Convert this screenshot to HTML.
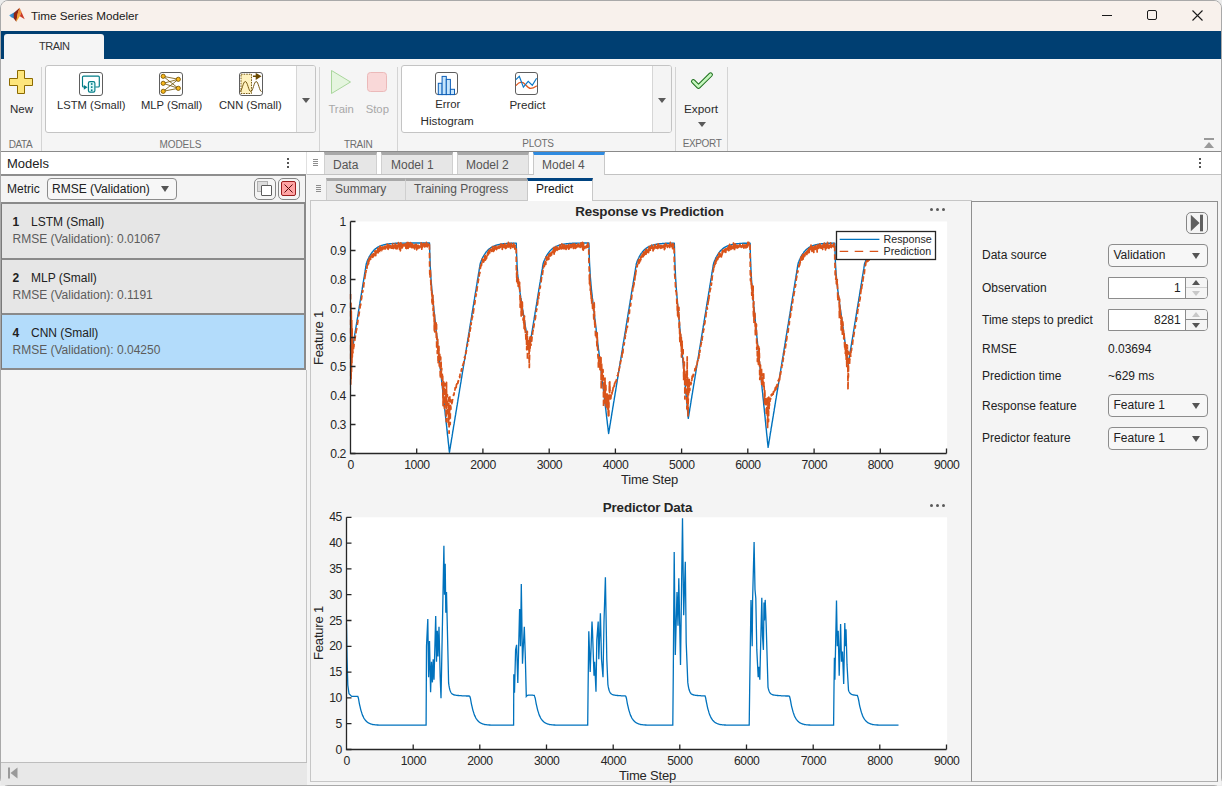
<!DOCTYPE html>
<html><head><meta charset="utf-8"><title>Time Series Modeler</title>
<style>
*{box-sizing:border-box;margin:0;padding:0}
html,body{width:1222px;height:786px;overflow:hidden;background:#ececec}
body{font-family:"Liberation Sans",sans-serif;position:relative;color:#212121}
.a{position:absolute}
.t{position:absolute;white-space:nowrap;line-height:1}
.sep{position:absolute;top:67px;width:1px;height:84px;background:#d4d4d4}
.glab{position:absolute;top:139px;font-size:10px;color:#6e6e6e;line-height:1;white-space:nowrap;letter-spacing:-0.1px}
.tbt{position:absolute;font-size:11.3px;color:#2b2b2b;line-height:1;white-space:nowrap;text-align:center}
.tab{position:absolute;top:152px;height:22px;background:#e6e6e6;border-top:3px solid #a8a8a8;border-left:1px solid #d0d0d0;border-right:1px solid #d0d0d0;font-size:12px;color:#555;line-height:1}
.itab{position:absolute;top:178px;height:22px;background:#e6e6e6;border-top:3px solid #a8a8a8;border-left:1px solid #cfcfcf;border-right:1px solid #cfcfcf;font-size:12px;color:#555;line-height:1}
.lbl{position:absolute;left:982px;font-size:12px;color:#212121;line-height:1;white-space:nowrap}
.dd{position:absolute;left:1108px;width:100px;height:23px;border:1px solid #8c8c8c;border-radius:4px;background:#f7f7f7}
.dd .v{position:absolute;left:4.5px;top:4.2px;font-size:12px;line-height:1;color:#212121}
.dd .ar{position:absolute;right:7px;top:8px;width:0;height:0;border-left:4px solid transparent;border-right:4px solid transparent;border-top:6px solid #555}
.item{position:absolute;left:1px;width:305px;background:#e6e6e6;border-left:1px solid #7a7a7a;border-right:2px solid #8a8a8a}
.item .n{position:absolute;left:10.5px;top:12px;font-size:12px;font-weight:bold;color:#212121;line-height:1}
.item .nm{position:absolute;left:29px;top:12px;font-size:12px;color:#212121;line-height:1}
.item .m{position:absolute;left:10.5px;top:29px;font-size:12px;color:#5c5c5c;line-height:1}
.grip{position:absolute;width:5px;height:7px;background:repeating-linear-gradient(#8e8e8e 0 1px,transparent 1px 2px)}
</style></head><body>
<!-- window frame -->
<div class="a" style="left:0;top:0;width:1222px;height:786px;background:#f5f5f5;border:1px solid #a9a9a9;border-radius:8px"></div>
<!-- title bar -->
<div class="a" style="left:1px;top:1px;width:1220px;height:30px;background:#f8f1ec;border-radius:7px 7px 0 0"></div>
<svg class="a" style="left:0;top:0" width="30" height="26" viewBox="0 0 30 26">
  <defs><linearGradient id="lgo" x1="0" y1="0" x2="0" y2="1"><stop offset="0" stop-color="#e0702a"/><stop offset="0.5" stop-color="#f2a13a"/><stop offset="1" stop-color="#f6b21f"/></linearGradient>
  <linearGradient id="lgb" x1="0" y1="0" x2="1" y2="0"><stop offset="0" stop-color="#3d9ee0"/><stop offset="1" stop-color="#1d5f9e"/></linearGradient></defs>
  <path d="M9.2 15.3 L14.5 12.3 L18.6 9.2 L15.8 13.5 L14.2 18.6 L11.2 17.2 Z" fill="url(#lgb)"/>
  <path d="M13.8 13.2 L19.6 7.8 L18 13 L16.3 21.8 L13.8 18.6 Z" fill="#8e2414"/>
  <path d="M19.6 7.8 L21.4 12.5 L19.8 16.2 L16.3 21.8 L17.6 13.5 Z" fill="url(#lgo)"/>
  <path d="M19.6 7.8 L24.7 19.2 L21.5 17.2 L19.8 16.2 L21.4 12.5 Z" fill="#cc3b26"/>
</svg>
<div class="t" style="left:31px;top:10px;font-size:11.7px;color:#1a1a1a">Time Series Modeler</div>
<!-- window buttons -->
<div class="a" style="left:1102px;top:15px;width:10px;height:1px;background:#1a1a1a"></div>
<div class="a" style="left:1147px;top:10px;width:10px;height:10px;border:1px solid #1a1a1a;border-radius:2px"></div>
<svg class="a" style="left:1192px;top:10px" width="11" height="11" viewBox="0 0 11 11"><path d="M0.5 0.5 L10.5 10.5 M10.5 0.5 L0.5 10.5" stroke="#1a1a1a" stroke-width="1.1"/></svg>
<!-- blue tab bar -->
<div class="a" style="left:1px;top:31px;width:1220px;height:28px;background:#003f72"></div>
<div class="a" style="left:4px;top:34px;width:100px;height:25px;background:#f5f5f5;border-radius:3px 3px 0 0"></div>
<div class="t" style="left:39px;top:41px;font-size:11px;letter-spacing:-0.5px;color:#333">TRAIN</div>
<!-- toolstrip -->
<div class="a" style="left:1px;top:59px;width:1220px;height:93px;background:#f5f5f5;border-bottom:1px solid #8a8a8a"></div>
<div class="a" style="left:45px;top:65px;width:271px;height:68px;background:#fff;border:1px solid #c4c4c4;border-radius:3px"></div>
<div class="a" style="left:296px;top:66px;width:19px;height:66px;background:#f4f4f4;border-left:1px solid #d6d6d6;border-radius:0 2px 2px 0"></div>
<div class="a" style="left:302px;top:98px;border-left:4px solid transparent;border-right:4px solid transparent;border-top:5px solid #5a5a5a"></div>
<div class="a" style="left:401px;top:65px;width:271px;height:68px;background:#fff;border:1px solid #c4c4c4;border-radius:3px"></div>
<div class="a" style="left:652px;top:66px;width:19px;height:66px;background:#f4f4f4;border-left:1px solid #d6d6d6;border-radius:0 2px 2px 0"></div>
<div class="a" style="left:658px;top:98px;border-left:4px solid transparent;border-right:4px solid transparent;border-top:5px solid #5a5a5a"></div>
<div class="sep" style="left:41px"></div>
<div class="sep" style="left:319px"></div>
<div class="sep" style="left:397px"></div>
<div class="sep" style="left:675px"></div>
<div class="sep" style="left:727px"></div>
<svg class="a" style="left:0;top:59px" width="760" height="92" viewBox="0 59 760 92"><path d="M17.5 70.5 h7 v8 h8 v7 h-8 v8 h-7 v-8 h-8 v-7 h8 z" fill="#fde57c" stroke="#8c6a00" stroke-width="1"/><rect x="79.5" y="72.5" width="23" height="23" rx="2.5" fill="#fff" stroke="#5e5e5e" stroke-width="1"/><g transform="translate(79,72)"><path d="M5.5 15 h-1 a1 1 0 0 1 -1 -1 v-8.9 a1 1 0 0 1 1 -1 h14.8 a1 1 0 0 1 1 1 v8.9 a1 1 0 0 1 -1 1 h-3" fill="none" stroke="#007c86" stroke-width="1.15"/><rect x="9.4" y="9.6" width="6.5" height="10.5" rx="1.6" fill="#dcfafa" stroke="#007c86" stroke-width="1.15"/><rect x="11.9" y="11.2" width="1.6" height="1.6" fill="#007c86"/><rect x="11.9" y="14.3" width="1.6" height="1.6" fill="#007c86"/><rect x="11.9" y="17.4" width="1.6" height="1.6" fill="#007c86"/><path d="M4.8 13 L8.6 15.2 L4.8 17.7Z" fill="#007c86"/></g><rect x="159.5" y="72.5" width="23" height="23" rx="2.5" fill="#fff" stroke="#5e5e5e" stroke-width="1"/><g transform="translate(159,72)"><line x1="4.2" y1="4.3" x2="19.3" y2="7.3" stroke="#6b4d00" stroke-width="0.8"/><line x1="4.2" y1="4.3" x2="19.3" y2="16.3" stroke="#6b4d00" stroke-width="0.8"/><line x1="4.2" y1="11.3" x2="19.3" y2="7.3" stroke="#6b4d00" stroke-width="0.8"/><line x1="4.2" y1="11.3" x2="19.3" y2="16.3" stroke="#6b4d00" stroke-width="0.8"/><line x1="4.2" y1="19.3" x2="19.3" y2="7.3" stroke="#6b4d00" stroke-width="0.8"/><line x1="4.2" y1="19.3" x2="19.3" y2="16.3" stroke="#6b4d00" stroke-width="0.8"/><circle cx="4.2" cy="4.3" r="2.1" fill="#f8b81c" stroke="#7a5600" stroke-width="0.9"/><circle cx="4.2" cy="11.3" r="2.1" fill="#f8b81c" stroke="#7a5600" stroke-width="0.9"/><circle cx="4.2" cy="19.3" r="2.1" fill="#f8b81c" stroke="#7a5600" stroke-width="0.9"/><circle cx="19.3" cy="7.3" r="2.1" fill="#f8b81c" stroke="#7a5600" stroke-width="0.9"/><circle cx="19.3" cy="16.3" r="2.1" fill="#f8b81c" stroke="#7a5600" stroke-width="0.9"/></g><rect x="239.5" y="72.5" width="23" height="23" rx="2.5" fill="#fff" stroke="#5e5e5e" stroke-width="1"/><g transform="translate(239,72)"><rect x="2" y="2.2" width="10.5" height="19.3" fill="#fff2bf" stroke="#6a4900" stroke-width="0.9" stroke-dasharray="1.6,1"/><path d="M0.8 19.6 C3 19.6 4 9.5 6.3 9.5 C8.6 9.5 9.6 19.5 11.8 19.5 C14 19.5 15 9.5 17.2 9.5 C19.4 9.5 20.4 19.6 22.6 19.6" fill="none" stroke="#6a4900" stroke-width="0.9"/><path d="M13.9 4.3 h4.5 M17.5 2.3 L21 4.3 L17.5 6.6 Z" stroke="#6a4900" stroke-width="1.6" fill="#6a4900"/></g><path d="M331.5 70.5 L350.5 82 L331.5 93.5 Z" fill="#e5f5df" stroke="#a9d69c" stroke-width="1"/><rect x="367.5" y="72.5" width="19" height="19" rx="3" fill="#f9d8d8" stroke="#ebb9b9" stroke-width="1"/><rect x="435.5" y="72.5" width="22" height="22" rx="2.5" fill="#fff" stroke="#5e5e5e" stroke-width="1"/><g transform="translate(435,72)" fill="#c6e5fc" stroke="#0e5fb8" stroke-width="1"><rect x="3.3" y="11.3" width="3.8" height="11.3"/><rect x="7.1" y="4.4" width="4.200000000000001" height="18.200000000000003"/><rect x="11.3" y="7.4" width="4.1" height="15.200000000000001"/><rect x="15.4" y="17.3" width="4.1" height="5.300000000000001"/></g><rect x="515.5" y="72.5" width="22" height="22" rx="2.5" fill="#fff" stroke="#5e5e5e" stroke-width="1"/><g transform="translate(515,72)" fill="none" stroke-width="1.2"><path d="M0.9 13.6 C3 11 5 10.2 6.5 10.2 C10 10.2 12 16.4 15.6 16.4 C18 16.4 20 15 21.8 13.8" stroke="#e0561c"/><path d="M0.9 7.6 L4.3 4.3 L8.4 15.1 L13.2 9.3 L17.3 13.2 L21.6 6.3" stroke="#0c78c6"/></g><path d="M693.3 81.4 L698.5 86.6 L710.6 74.7" fill="none" stroke="#1c6e1c" stroke-width="4.6" stroke-linecap="round" stroke-linejoin="round"/><path d="M693.3 81.4 L698.5 86.6 L710.6 74.7" fill="none" stroke="#c7f7bf" stroke-width="2.6" stroke-linecap="round" stroke-linejoin="round"/><path d="M698 122 h8 l-4 5 z" fill="#5a5a5a"/></svg>
<div class="a" style="left:1204px;top:138px;width:10px;height:2px;background:#9a9a9a"></div>
<div class="a" style="left:1204px;top:142px;border-left:5px solid transparent;border-right:5px solid transparent;border-bottom:6px solid #9a9a9a"></div>
<div class="t" style="left:10px;top:103.6px;font-size:11.5px;color:#2b2b2b;">New</div>
<div class="t" style="left:57px;top:99.8px;font-size:11.2px;color:#2b2b2b;">LSTM (Small)</div>
<div class="t" style="left:141px;top:99.8px;font-size:11.2px;color:#2b2b2b;">MLP (Small)</div>
<div class="t" style="left:219px;top:99.8px;font-size:11.2px;color:#2b2b2b;">CNN (Small)</div>
<div class="t" style="left:328.4px;top:103.8px;font-size:11.3px;color:#a8a8a8;">Train</div>
<div class="t" style="left:365.7px;top:103.8px;font-size:11.3px;color:#a8a8a8;">Stop</div>
<div class="t" style="left:435.2px;top:99.4px;font-size:11.3px;color:#2b2b2b;">Error</div>
<div class="t" style="left:420.5px;top:114.5px;font-size:11.7px;color:#2b2b2b;">Histogram</div>
<div class="t" style="left:509.4px;top:99.4px;font-size:11.6px;color:#2b2b2b;">Predict</div>
<div class="t" style="left:684px;top:103.5px;font-size:11.8px;color:#2b2b2b;">Export</div>
<div class="t" style="left:8.7px;top:139.5px;font-size:10px;color:#6e6e6e;letter-spacing:-0.4px">DATA</div>
<div class="t" style="left:159.6px;top:139.5px;font-size:10px;color:#6e6e6e;letter-spacing:-0.1px">MODELS</div>
<div class="t" style="left:343.9px;top:139.5px;font-size:10px;color:#6e6e6e;letter-spacing:-0.3px">TRAIN</div>
<div class="t" style="left:522.3px;top:139.3px;font-size:10px;color:#6e6e6e;letter-spacing:-0.3px">PLOTS</div>
<div class="t" style="left:682.8px;top:139.3px;font-size:10px;color:#6e6e6e;letter-spacing:-0.4px">EXPORT</div>
<!-- models panel -->
<div class="a" style="left:1px;top:152px;width:305px;height:23px;background:#fff"></div>
<div class="t" style="left:7px;top:157px;font-size:13px;color:#212121">Models</div>
<div class="a" style="left:287px;top:158px;width:2px;height:2px;background:#555"></div>
<div class="a" style="left:287px;top:162px;width:2px;height:2px;background:#555"></div>
<div class="a" style="left:287px;top:166px;width:2px;height:2px;background:#555"></div>
<div class="a" style="left:1px;top:174px;width:305px;height:2px;background:#8e8e8e"></div>
<div class="a" style="left:1px;top:176px;width:305px;height:26px;background:#f4f4f4"></div>
<div class="t" style="left:7px;top:183px;font-size:12px;color:#212121">Metric</div>
<div class="a" style="left:47px;top:178px;width:130px;height:22px;border:1px solid #8c8c8c;border-radius:4px;background:#f7f7f7"></div>
<div class="t" style="left:52px;top:183px;font-size:12px;color:#212121">RMSE (Validation)</div>
<div class="a" style="left:161px;top:186px;width:0;height:0;border-left:4px solid transparent;border-right:4px solid transparent;border-top:6px solid #555"></div>
<div class="a" style="left:254px;top:178px;width:22px;height:22px;border:1px solid #858585;border-radius:5px"></div>
<div class="a" style="left:257px;top:181px;width:11px;height:11px;background:#dcdcdc;border:1px solid #b0b0b0"></div>
<div class="a" style="left:261px;top:185px;width:11px;height:11px;background:#fff;border:1px solid #5a5a5a;border-radius:1px"></div>
<div class="a" style="left:278px;top:178px;width:22px;height:22px;border:1px solid #858585;border-radius:5px"></div>
<div class="a" style="left:281px;top:181px;width:15px;height:15px;background:#ffa3a3;border:1.5px solid #9b1d1d;border-radius:2px"></div>
<svg class="a" style="left:284px;top:184px" width="9" height="9" viewBox="0 0 9 9"><path d="M0.5 0.5L8.5 8.5M8.5 0.5L0.5 8.5" stroke="#5a0d0d" stroke-width="1"/></svg>
<div class="a" style="left:1px;top:202px;width:305px;height:2px;background:#8a8a8a"></div>
<div class="a" style="left:305px;top:175px;width:1px;height:28px;background:#8a8a8a"></div>
<!-- items -->
<div class="item" style="top:204px;height:56px;border-bottom:2px solid #8a8a8a"><span class="n">1</span><span class="nm">LSTM (Small)</span><span class="m">RMSE (Validation): 0.01067</span></div>
<div class="item" style="top:260px;height:55px;border-bottom:2px solid #8a8a8a"><span class="n">2</span><span class="nm">MLP (Small)</span><span class="m">RMSE (Validation): 0.1191</span></div>
<div class="item" style="top:315px;height:55px;background:#b3dcfb;border-bottom:2px solid #8a8a8a"><span class="n">4</span><span class="nm">CNN (Small)</span><span class="m">RMSE (Validation): 0.04250</span></div>
<div class="a" style="left:306px;top:370px;width:1px;height:392px;background:#c4c4c4"></div>
<!-- models footer -->
<div class="a" style="left:1px;top:762px;width:306px;height:23px;background:#e8e8e8;border-top:1px solid #bdbdbd"></div>
<svg class="a" style="left:8px;top:767px" width="10" height="12" viewBox="0 0 10 12"><rect x="0" y="0.5" width="2" height="11" fill="#9a9a9a"/><path d="M9.5 0.5 L2.5 6 L9.5 11.5Z" fill="#9a9a9a"/></svg>
<!-- document tab bar -->
<div class="a" style="left:307px;top:152px;width:914px;height:23px;background:#fff;border-bottom:1px solid #c2c2c2"></div>
<div class="a" style="left:306px;top:152px;width:1px;height:23px;background:#e0e0e0"></div>
<div class="grip" style="left:313px;top:159px"></div>
<div class="tab" style="left:324px;width:53px"><span class="t" style="left:8px;top:4px">Data</span></div>
<div class="tab" style="left:381px;width:72px"><span class="t" style="left:9px;top:4px">Model 1</span></div>
<div class="tab" style="left:457px;width:72px"><span class="t" style="left:8px;top:4px">Model 2</span></div>
<div class="tab" style="left:533px;width:72px;height:23px;background:#f4f4f4;border-top-color:#2f8be0;border-left-color:#c8c8c8;border-right-color:#c8c8c8"><span class="t" style="left:8px;top:4px">Model 4</span></div>
<div class="a" style="left:1199px;top:158px;width:2px;height:2px;background:#555"></div>
<div class="a" style="left:1199px;top:162px;width:2px;height:2px;background:#555"></div>
<div class="a" style="left:1199px;top:166px;width:2px;height:2px;background:#555"></div>
<!-- doc content -->
<div class="a" style="left:307px;top:175px;width:914px;height:610px;background:#f4f4f4"></div>
<div class="grip" style="left:316px;top:185px"></div>
<div class="itab" style="left:326px;width:80px"><span class="t" style="left:8px;top:1.5px">Summary</span></div>
<div class="itab" style="left:405px;width:123px"><span class="t" style="left:8px;top:1.5px">Training Progress</span></div>
<!-- plot panel -->
<div class="a" style="left:310px;top:200px;width:662px;height:582px;border:1px solid #c6c6c6;border-right:none;background:#f4f4f4"></div>
<div class="itab" style="left:527px;width:66px;height:23px;background:#fff;border-top-color:#004380;border-left-color:#c8c8c8;border-right-color:#c8c8c8"><span class="t" style="left:8px;top:1.5px;color:#1a1a1a">Predict</span></div>
<svg class="a" style="left:0;top:0" width="1222" height="786" viewBox="0 0 1222 786" font-family="Liberation Sans, sans-serif">
<rect x="350.5" y="221.5" width="596.6" height="232.0" fill="#fff"/>
<rect x="346.5" y="517.3" width="600.6" height="232.20000000000005" fill="#fff"/>
<clipPath id="c1"><rect x="349.5" y="218.5" width="598.0" height="235.0"/></clipPath>
<clipPath id="c2"><rect x="345.5" y="514.3" width="602.0" height="235.20000000000005"/></clipPath>
<g clip-path="url(#c1)"><polyline points="350.5,360.7 350.8,359.1 351.0,357.5 351.3,355.8 351.6,354.2 351.8,352.6 352.1,351.0 352.4,349.3 352.6,347.7 352.9,346.1 353.1,344.5 353.4,342.8 353.7,341.2 353.9,339.6 354.2,338.0 354.5,336.3 354.7,334.7 355.0,333.1 355.3,331.5 355.5,329.8 355.8,328.2 356.1,326.6 356.3,325.0 356.6,323.3 356.9,321.7 357.1,320.1 357.4,318.5 357.7,316.9 357.9,315.2 358.2,313.6 358.4,312.0 358.7,310.4 359.0,308.7 359.2,307.1 359.5,305.5 359.8,303.9 360.0,302.2 360.3,300.6 360.6,299.0 360.8,297.4 361.1,295.7 361.4,294.1 361.6,292.5 361.9,290.9 362.2,289.2 362.4,287.6 362.7,286.0 362.9,284.4 363.2,282.7 363.5,281.1 363.7,279.5 364.0,277.9 364.3,276.3 364.5,274.6 364.8,273.0 365.1,271.4 365.3,269.8 365.6,268.1 365.9,266.5 366.1,264.9 366.4,263.4 366.7,262.7 366.9,262.0 367.2,261.3 367.5,260.6 367.7,260.0 368.0,259.4 368.2,258.8 368.5,258.3 368.8,257.7 369.0,257.2 369.3,256.7 369.6,256.2 369.8,255.7 370.1,255.3 370.4,254.8 370.6,254.4 370.9,254.0 371.2,253.6 371.4,253.2 371.7,252.8 372.0,252.5 372.2,252.2 372.5,251.8 372.8,251.5 373.0,251.2 373.3,250.9 373.5,250.6 373.8,250.4 374.1,250.1 374.3,249.8 374.6,249.6 374.9,249.3 375.1,249.1 375.4,248.9 375.7,248.7 375.9,248.5 376.2,248.3 376.5,248.1 376.7,247.9 377.0,247.7 377.3,247.6 377.5,247.4 377.8,247.2 378.0,247.1 378.3,246.9 378.6,246.8 378.8,246.7 379.1,246.5 379.4,246.4 379.6,246.3 379.9,246.2 380.2,246.0 380.4,245.9 380.7,245.8 381.0,245.7 381.2,245.6 381.5,245.5 381.8,245.4 382.0,245.4 382.3,245.3 382.6,245.2 382.8,245.1 383.1,245.0 383.3,245.0 383.6,244.9 383.9,244.8 384.1,244.7 384.4,244.7 384.7,244.6 384.9,244.6 385.2,244.5 385.5,244.5 385.7,244.4 386.0,244.3 386.3,244.3 386.5,244.3 386.8,244.2 387.1,244.2 387.3,244.1 387.6,244.1 387.8,244.0 388.1,244.0 388.4,244.0 388.6,243.9 388.9,243.9 389.2,243.9 389.4,243.8 389.7,243.8 390.0,243.8 390.2,243.7 390.5,243.7 390.8,243.7 391.0,243.7 391.3,243.6 391.6,243.6 391.8,243.6 392.1,243.6 392.4,243.5 392.6,243.5 392.9,243.5 393.1,243.5 393.4,243.5 393.7,243.4 393.9,243.4 394.2,243.4 394.5,243.4 394.7,243.4 395.0,243.4 395.3,243.3 395.5,243.3 395.8,243.3 396.1,243.3 396.3,243.3 396.6,243.3 396.9,243.3 397.1,243.3 397.4,243.3 397.7,243.2 397.9,243.2 398.2,243.2 398.4,243.2 398.7,243.2 399.0,243.2 399.2,243.2 399.5,243.2 399.8,243.2 400.0,243.2 400.3,243.2 400.6,243.1 400.8,243.1 401.1,243.1 401.4,243.1 401.6,243.1 401.9,243.1 402.2,243.1 402.4,243.1 402.7,243.1 402.9,243.1 403.2,243.1 403.5,243.1 403.7,243.1 404.0,243.1 404.3,243.1 404.5,243.1 404.8,243.1 405.1,243.1 405.3,243.1 405.6,243.1 405.9,243.1 406.1,243.0 406.4,243.0 406.7,243.0 406.9,243.0 407.2,243.0 407.5,243.0 407.7,243.0 408.0,243.0 408.2,243.0 408.5,243.0 408.8,243.0 409.0,243.0 409.3,243.0 409.6,243.0 409.8,243.0 410.1,243.0 410.4,243.0 410.6,243.0 410.9,243.0 411.2,243.0 411.4,243.0 411.7,243.0 412.0,243.0 412.2,243.0 412.5,243.0 412.7,243.0 413.0,243.0 413.3,243.0 413.5,243.0 413.8,243.0 414.1,243.0 414.3,243.0 414.6,243.0 414.9,243.0 415.1,243.0 415.4,243.0 415.7,243.0 415.9,243.0 416.2,243.0 416.5,243.0 416.7,243.0 417.0,243.0 417.3,243.0 417.5,243.0 417.8,243.0 418.0,243.0 418.3,243.0 418.6,243.0 418.8,243.0 419.1,243.0 419.4,243.0 419.6,243.0 419.9,243.0 420.2,243.0 420.4,243.0 420.7,243.0 421.0,243.0 421.2,243.0 421.5,243.0 421.8,243.0 422.0,243.0 422.3,243.0 422.5,243.0 422.8,243.0 423.1,243.0 423.3,243.0 423.6,243.0 423.9,243.0 424.1,243.0 424.4,243.0 424.7,243.0 424.9,243.0 425.2,243.0 425.5,243.0 425.7,243.0 426.0,243.0 426.3,243.0 426.5,243.0 426.8,243.0 427.1,243.0 427.3,243.0 427.6,243.0 427.8,243.0 428.1,243.0 428.4,243.0 428.6,243.0 428.9,243.0 429.2,243.0 429.4,243.0 429.5,243.0 429.7,250.6 430.0,258.8 430.2,265.3 430.5,270.7 430.8,275.3 431.0,279.2 431.3,282.8 431.6,286.0 431.8,289.0 432.1,291.8 432.4,294.5 432.6,297.2 432.9,299.7 433.1,302.3 433.4,304.8 433.7,307.3 433.9,309.8 434.2,312.2 434.5,314.7 434.7,317.1 435.0,319.6 435.3,322.0 435.5,324.5 435.8,326.9 436.1,329.3 436.3,331.8 436.6,334.2 436.9,336.6 437.1,339.1 437.4,341.5 437.6,344.0 437.9,346.4 438.2,348.8 438.4,351.3 438.7,353.7 439.0,356.1 439.2,358.6 439.5,361.0 439.8,363.4 440.0,365.9 440.3,368.3 440.6,370.7 440.8,373.2 441.1,375.6 441.4,378.1 441.6,380.5 441.9,382.9 442.2,385.4 442.4,387.8 442.7,390.2 442.9,392.7 443.2,395.1 443.5,397.5 443.7,400.0 444.0,402.4 444.3,404.8 444.5,407.3 444.8,409.7 445.1,412.2 445.3,414.6 445.6,417.0 445.9,419.5 446.1,421.9 446.4,424.3 446.7,426.8 446.9,429.2 447.2,431.6 447.4,434.1 447.7,436.5 448.0,438.9 448.2,441.4 448.5,443.8 448.8,446.3 449.0,448.7 449.3,451.1 449.4,452.3 449.6,451.5 449.8,449.9 450.1,448.3 450.4,446.7 450.6,445.0 450.9,443.4 451.2,441.8 451.4,440.2 451.7,438.5 452.0,436.9 452.2,435.3 452.5,433.7 452.7,432.0 453.0,430.4 453.3,428.8 453.5,427.2 453.8,425.5 454.1,423.9 454.3,422.3 454.6,420.7 454.9,419.0 455.1,417.4 455.4,415.8 455.7,414.2 455.9,412.6 456.2,410.9 456.5,409.3 456.7,407.7 457.0,406.1 457.3,404.4 457.5,402.8 457.8,401.2 458.0,399.6 458.3,397.9 458.6,396.3 458.8,394.7 459.1,393.1 459.4,391.4 459.6,389.8 459.9,388.2 460.2,386.6 460.4,384.9 460.7,383.3 461.0,381.7 461.2,380.1 461.5,378.4 461.8,376.8 462.0,375.2 462.3,373.6 462.5,372.0 462.8,370.3 463.1,368.7 463.3,367.1 463.6,365.5 463.9,363.8 464.1,362.2 464.4,360.6 464.7,359.0 464.9,357.3 465.2,355.7 465.5,354.1 465.7,352.5 466.0,350.8 466.3,349.2 466.5,347.6 466.8,346.0 467.1,344.3 467.3,342.7 467.6,341.1 467.8,339.5 468.1,337.8 468.4,336.2 468.6,334.6 468.9,333.0 469.2,331.4 469.4,329.7 469.7,328.1 470.0,326.5 470.2,324.9 470.5,323.2 470.8,321.6 471.0,320.0 471.3,318.4 471.6,316.7 471.8,315.1 472.1,313.5 472.3,311.9 472.6,310.2 472.9,308.6 473.1,307.0 473.4,305.4 473.7,303.7 473.9,302.1 474.2,300.5 474.5,298.9 474.7,297.2 475.0,295.6 475.3,294.0 475.5,292.4 475.8,290.8 476.1,289.1 476.3,287.5 476.6,285.9 476.9,284.3 477.1,282.6 477.4,281.0 477.6,279.4 477.9,277.8 478.2,276.1 478.4,274.5 478.7,272.9 479.0,271.3 479.2,269.6 479.5,268.0 479.8,266.4 480.0,264.8 480.3,263.4 480.6,262.6 480.8,261.9 481.1,261.3 481.4,260.6 481.6,260.0 481.9,259.4 482.1,258.8 482.4,258.2 482.7,257.7 482.9,257.1 483.2,256.6 483.5,256.1 483.7,255.7 484.0,255.2 484.3,254.8 484.5,254.4 484.8,254.0 485.1,253.6 485.3,253.2 485.6,252.8 485.9,252.5 486.1,252.1 486.4,251.8 486.7,251.5 486.9,251.2 487.2,250.9 487.4,250.6 487.7,250.3 488.0,250.1 488.2,249.8 488.5,249.6 488.8,249.3 489.0,249.1 489.3,248.9 489.6,248.7 489.8,248.5 490.1,248.3 490.4,248.1 490.6,247.9 490.9,247.7 491.2,247.6 491.4,247.4 491.7,247.2 492.0,247.1 492.2,246.9 492.5,246.8 492.7,246.7 493.0,246.5 493.3,246.4 493.5,246.3 493.8,246.2 494.1,246.0 494.3,245.9 494.6,245.8 494.9,245.7 495.1,245.6 495.4,245.5 495.7,245.4 495.9,245.3 496.2,245.3 496.5,245.2 496.7,245.1 497.0,245.0 497.2,245.0 497.5,244.9 497.8,244.8 498.0,244.7 498.3,244.7 498.6,244.6 498.8,244.6 499.1,244.5 499.4,244.4 499.6,244.4 499.9,244.3 500.2,244.3 500.4,244.2 500.7,244.2 501.0,244.2 501.2,244.1 501.5,244.1 501.8,244.0 502.0,244.0 502.3,244.0 502.5,243.9 502.8,243.9 503.1,243.9 503.3,243.8 503.6,243.8 503.9,243.8 504.1,243.7 504.4,243.7 504.7,243.7 504.9,243.7 505.2,243.6 505.5,243.6 505.7,243.6 506.0,243.6 506.3,243.5 506.5,243.5 506.8,243.5 507.0,243.5 507.3,243.5 507.6,243.4 507.8,243.4 508.1,243.4 508.4,243.4 508.6,243.4 508.9,243.4 509.2,243.3 509.4,243.3 509.7,243.3 510.0,243.3 510.2,243.3 510.5,243.3 510.8,243.3 511.0,243.3 511.3,243.2 511.6,243.2 511.8,243.2 512.1,243.2 512.3,243.2 512.6,243.2 512.9,243.2 513.1,243.2 513.4,243.2 513.7,243.2 513.9,243.2 514.2,243.2 514.5,243.1 514.7,243.1 515.0,243.1 515.3,243.1 515.5,243.1 515.8,243.1 516.1,243.1 516.3,243.1 516.3,245.6 516.6,254.1 516.9,260.6 517.1,265.8 517.4,269.9 517.6,273.4 517.9,276.3 518.2,278.9 518.4,281.2 518.7,283.4 519.0,285.4 519.2,287.3 519.5,289.1 519.8,290.9 520.0,292.6 520.3,294.3 520.6,296.1 520.8,297.7 521.1,299.4 521.4,301.1 521.6,302.8 521.9,304.4 522.1,306.1 522.4,307.8 522.7,309.4 522.9,311.1 523.2,312.8 523.5,314.4 523.7,316.1 524.0,317.7 524.3,319.4 524.5,321.1 524.8,322.7 525.1,324.4 525.3,326.0 525.6,327.7 525.9,329.4 526.1,331.0 526.4,332.7 526.7,334.3 526.9,336.0 527.2,337.7 527.4,339.3 527.7,341.0 528.0,342.6 528.2,344.3 528.5,345.9 528.8,347.6 529.0,349.3 529.1,349.7 529.3,348.5 529.6,346.8 529.8,345.2 530.1,343.6 530.4,342.0 530.6,340.3 530.9,338.7 531.2,337.1 531.4,335.5 531.7,333.8 531.9,332.2 532.2,330.6 532.5,329.0 532.7,327.4 533.0,325.7 533.3,324.1 533.5,322.5 533.8,320.9 534.1,319.2 534.3,317.6 534.6,316.0 534.9,314.4 535.1,312.7 535.4,311.1 535.7,309.5 535.9,307.9 536.2,306.2 536.5,304.6 536.7,303.0 537.0,301.4 537.2,299.7 537.5,298.1 537.8,296.5 538.0,294.9 538.3,293.2 538.6,291.6 538.8,290.0 539.1,288.4 539.4,286.8 539.6,285.1 539.9,283.5 540.2,281.9 540.4,280.3 540.7,278.6 541.0,277.0 541.2,275.4 541.5,273.8 541.7,272.1 542.0,270.5 542.3,268.9 542.5,267.3 542.8,265.6 543.1,264.0 543.3,263.0 543.6,262.3 543.9,261.6 544.1,260.9 544.4,260.3 544.7,259.7 544.9,259.1 545.2,258.5 545.5,258.0 545.7,257.4 546.0,256.9 546.3,256.4 546.5,255.9 546.8,255.5 547.0,255.0 547.3,254.6 547.6,254.2 547.8,253.8 548.1,253.4 548.4,253.0 548.6,252.7 548.9,252.3 549.2,252.0 549.4,251.7 549.7,251.3 550.0,251.0 550.2,250.8 550.5,250.5 550.8,250.2 551.0,249.9 551.3,249.7 551.6,249.5 551.8,249.2 552.1,249.0 552.3,248.8 552.6,248.6 552.9,248.4 553.1,248.2 553.4,248.0 553.7,247.8 553.9,247.6 554.2,247.5 554.5,247.3 554.7,247.2 555.0,247.0 555.3,246.9 555.5,246.7 555.8,246.6 556.1,246.5 556.3,246.3 556.6,246.2 556.8,246.1 557.1,246.0 557.4,245.9 557.6,245.8 557.9,245.7 558.2,245.6 558.4,245.5 558.7,245.4 559.0,245.3 559.2,245.2 559.5,245.1 559.8,245.1 560.0,245.0 560.3,244.9 560.6,244.8 560.8,244.8 561.1,244.7 561.4,244.7 561.6,244.6 561.9,244.5 562.1,244.5 562.4,244.4 562.7,244.4 562.9,244.3 563.2,244.3 563.5,244.2 563.7,244.2 564.0,244.1 564.3,244.1 564.5,244.1 564.8,244.0 565.1,244.0 565.3,243.9 565.6,243.9 565.9,243.9 566.1,243.8 566.4,243.8 566.6,243.8 566.9,243.7 567.2,243.7 567.4,243.7 567.7,243.7 568.0,243.6 568.2,243.6 568.5,243.6 568.8,243.6 569.0,243.5 569.3,243.5 569.6,243.5 569.8,243.5 570.1,243.5 570.4,243.5 570.6,243.4 570.9,243.4 571.2,243.4 571.4,243.4 571.7,243.4 571.9,243.4 572.2,243.3 572.5,243.3 572.7,243.3 573.0,243.3 573.3,243.3 573.5,243.3 573.8,243.3 574.1,243.3 574.3,243.2 574.6,243.2 574.9,243.2 575.1,243.2 575.4,243.2 575.7,243.2 575.9,243.2 576.2,243.2 576.5,243.2 576.7,243.2 577.0,243.2 577.2,243.2 577.5,243.1 577.8,243.1 578.0,243.1 578.3,243.1 578.6,243.1 578.8,243.1 579.1,243.1 579.4,243.1 579.6,243.1 579.9,243.1 580.2,243.1 580.4,243.1 580.7,243.1 581.0,243.1 581.2,243.1 581.5,243.1 581.7,243.1 582.0,243.1 582.3,243.1 582.5,243.1 582.8,243.0 583.1,243.0 583.3,243.0 583.6,243.0 583.9,243.0 584.1,243.0 584.4,243.0 584.7,243.0 584.9,243.0 585.2,243.0 585.5,243.0 585.7,243.0 586.0,243.0 586.3,243.0 586.5,243.0 586.8,243.0 587.0,243.0 587.3,243.0 587.6,243.0 587.8,243.0 588.1,243.0 588.4,243.0 588.6,243.0 588.9,243.0 589.2,252.6 589.4,260.1 589.7,266.1 590.0,271.0 590.2,275.2 590.5,278.8 590.8,282.0 591.0,284.9 591.3,287.7 591.5,290.2 591.8,292.7 592.1,295.1 592.3,297.4 592.6,299.7 592.9,302.0 593.1,304.3 593.4,306.5 593.7,308.8 593.9,311.0 594.2,313.2 594.5,315.4 594.7,317.6 595.0,319.8 595.3,322.0 595.5,324.3 595.8,326.5 596.1,328.7 596.3,330.9 596.6,333.1 596.8,335.3 597.1,337.5 597.4,339.7 597.6,341.9 597.9,344.1 598.2,346.3 598.4,348.5 598.7,350.7 599.0,352.9 599.2,355.2 599.5,357.4 599.8,359.6 600.0,361.8 600.3,364.0 600.6,366.2 600.8,368.4 601.1,370.6 601.3,372.8 601.6,375.0 601.9,377.2 602.1,379.4 602.4,381.6 602.7,383.8 602.9,386.0 603.2,388.3 603.5,390.5 603.7,392.7 604.0,394.9 604.3,397.1 604.5,399.3 604.8,401.5 605.1,403.7 605.3,405.9 605.6,408.1 605.9,410.3 606.1,412.5 606.4,414.7 606.6,416.9 606.9,419.1 607.2,421.4 607.4,423.6 607.7,425.8 608.0,428.0 608.2,430.2 608.5,432.4 608.6,433.5 608.8,432.7 609.0,431.1 609.3,429.4 609.6,427.8 609.8,426.2 610.1,424.6 610.4,422.9 610.6,421.3 610.9,419.7 611.2,418.1 611.4,416.4 611.7,414.8 611.9,413.2 612.2,411.6 612.5,409.9 612.7,408.3 613.0,406.7 613.3,405.1 613.5,403.4 613.8,401.8 614.1,400.2 614.3,398.6 614.6,396.9 614.9,395.3 615.1,393.7 615.4,392.1 615.7,390.5 615.9,388.8 616.2,387.2 616.4,385.6 616.7,384.0 617.0,382.3 617.2,380.7 617.5,379.1 617.8,377.5 618.0,375.8 618.3,374.2 618.6,372.6 618.8,371.0 619.1,369.3 619.4,367.7 619.6,366.1 619.9,364.5 620.2,362.8 620.4,361.2 620.7,359.6 621.0,358.0 621.2,356.4 621.5,354.7 621.7,353.1 622.0,351.5 622.3,349.9 622.5,348.2 622.8,346.6 623.1,345.0 623.3,343.4 623.6,341.7 623.9,340.1 624.1,338.5 624.4,336.9 624.7,335.2 624.9,333.6 625.2,332.0 625.5,330.4 625.7,328.7 626.0,327.1 626.2,325.5 626.5,323.9 626.8,322.2 627.0,320.6 627.3,319.0 627.6,317.4 627.8,315.8 628.1,314.1 628.4,312.5 628.6,310.9 628.9,309.3 629.2,307.6 629.4,306.0 629.7,304.4 630.0,302.8 630.2,301.1 630.5,299.5 630.8,297.9 631.0,296.3 631.3,294.6 631.5,293.0 631.8,291.4 632.1,289.8 632.3,288.1 632.6,286.5 632.9,284.9 633.1,283.3 633.4,281.6 633.7,280.0 633.9,278.4 634.2,276.8 634.5,275.1 634.7,273.5 635.0,271.9 635.3,270.3 635.5,268.7 635.8,267.0 636.1,265.4 636.3,263.8 636.6,262.9 636.8,262.2 637.1,261.5 637.4,260.9 637.6,260.2 637.9,259.6 638.2,259.0 638.4,258.4 638.7,257.9 639.0,257.3 639.2,256.8 639.5,256.3 639.8,255.9 640.0,255.4 640.3,255.0 640.6,254.5 640.8,254.1 641.1,253.7 641.3,253.3 641.6,253.0 641.9,252.6 642.1,252.3 642.4,251.9 642.7,251.6 642.9,251.3 643.2,251.0 643.5,250.7 643.7,250.4 644.0,250.2 644.3,249.9 644.5,249.7 644.8,249.4 645.1,249.2 645.3,249.0 645.6,248.8 645.9,248.5 646.1,248.4 646.4,248.2 646.6,248.0 646.9,247.8 647.2,247.6 647.4,247.5 647.7,247.3 648.0,247.1 648.2,247.0 648.5,246.8 648.8,246.7 649.0,246.6 649.3,246.4 649.6,246.3 649.8,246.2 650.1,246.1 650.4,246.0 650.6,245.9 650.9,245.8 651.1,245.7 651.4,245.6 651.7,245.5 651.9,245.4 652.2,245.3 652.5,245.2 652.7,245.1 653.0,245.1 653.3,245.0 653.5,244.9 653.8,244.8 654.1,244.8 654.3,244.7 654.6,244.6 654.9,244.6 655.1,244.5 655.4,244.5 655.7,244.4 655.9,244.4 656.2,244.3 656.4,244.3 656.7,244.2 657.0,244.2 657.2,244.1 657.5,244.1 657.8,244.0 658.0,244.0 658.3,244.0 658.6,243.9 658.8,243.9 659.1,243.9 659.4,243.8 659.6,243.8 659.9,243.8 660.2,243.7 660.4,243.7 660.7,243.7 660.9,243.7 661.2,243.6 661.5,243.6 661.7,243.6 662.0,243.6 662.3,243.5 662.5,243.5 662.8,243.5 663.1,243.5 663.3,243.5 663.6,243.4 663.9,243.4 664.1,243.4 664.4,243.4 664.7,243.4 664.9,243.4 665.2,243.4 665.5,243.3 665.7,243.3 666.0,243.3 666.2,243.3 666.5,243.3 666.8,243.3 667.0,243.3 667.3,243.3 667.6,243.2 667.8,243.2 668.1,243.2 668.4,243.2 668.6,243.2 668.9,243.2 669.2,243.2 669.4,243.2 669.7,243.2 670.0,243.2 670.2,243.2 670.5,243.1 670.8,243.1 671.0,243.1 671.3,243.1 671.5,243.1 671.8,243.1 672.1,243.1 672.3,243.1 672.6,243.1 672.9,243.1 673.1,243.1 673.4,243.1 673.7,243.1 673.9,243.1 674.2,243.1 674.3,243.1 674.5,248.5 674.7,257.6 675.0,264.9 675.3,270.9 675.5,276.1 675.8,280.5 676.0,284.6 676.3,288.2 676.6,291.7 676.8,294.9 677.1,298.1 677.4,301.1 677.6,304.1 677.9,307.0 678.2,309.9 678.4,312.8 678.7,315.7 679.0,318.6 679.2,321.4 679.5,324.2 679.8,327.1 680.0,329.9 680.3,332.8 680.6,335.6 680.8,338.4 681.1,341.2 681.3,344.1 681.6,346.9 681.9,349.7 682.1,352.6 682.4,355.4 682.7,358.2 682.9,361.0 683.2,363.9 683.5,366.7 683.7,369.5 684.0,372.3 684.3,375.2 684.5,378.0 684.8,380.8 685.1,383.6 685.3,386.5 685.6,389.3 685.8,392.1 686.1,394.9 686.4,397.8 686.6,400.6 686.9,403.4 687.2,406.3 687.4,409.1 687.7,411.9 688.0,414.7 688.2,417.6 688.3,418.3 688.5,417.0 688.8,415.4 689.0,413.8 689.3,412.2 689.6,410.6 689.8,408.9 690.1,407.3 690.4,405.7 690.6,404.1 690.9,402.4 691.1,400.8 691.4,399.2 691.7,397.6 691.9,395.9 692.2,394.3 692.5,392.7 692.7,391.1 693.0,389.4 693.3,387.8 693.5,386.2 693.8,384.6 694.1,382.9 694.3,381.3 694.6,379.7 694.9,378.1 695.1,376.4 695.4,374.8 695.7,373.2 695.9,371.6 696.2,370.0 696.4,368.3 696.7,366.7 697.0,365.1 697.2,363.5 697.5,361.8 697.8,360.2 698.0,358.6 698.3,357.0 698.6,355.3 698.8,353.7 699.1,352.1 699.4,350.5 699.6,348.8 699.9,347.2 700.2,345.6 700.4,344.0 700.7,342.3 700.9,340.7 701.2,339.1 701.5,337.5 701.7,335.8 702.0,334.2 702.3,332.6 702.5,331.0 702.8,329.4 703.1,327.7 703.3,326.1 703.6,324.5 703.9,322.9 704.1,321.2 704.4,319.6 704.7,318.0 704.9,316.4 705.2,314.7 705.5,313.1 705.7,311.5 706.0,309.9 706.2,308.2 706.5,306.6 706.8,305.0 707.0,303.4 707.3,301.7 707.6,300.1 707.8,298.5 708.1,296.9 708.4,295.2 708.6,293.6 708.9,292.0 709.2,290.4 709.4,288.8 709.7,287.1 710.0,285.5 710.2,283.9 710.5,282.3 710.7,280.6 711.0,279.0 711.3,277.4 711.5,275.8 711.8,274.1 712.1,272.5 712.3,270.9 712.6,269.3 712.9,267.6 713.1,266.0 713.4,264.4 713.7,263.2 713.9,262.5 714.2,261.8 714.5,261.1 714.7,260.5 715.0,259.8 715.3,259.2 715.5,258.6 715.8,258.1 716.0,257.5 716.3,257.0 716.6,256.5 716.8,256.0 717.1,255.6 717.4,255.1 717.6,254.7 717.9,254.3 718.2,253.9 718.4,253.5 718.7,253.1 719.0,252.7 719.2,252.4 719.5,252.1 719.8,251.7 720.0,251.4 720.3,251.1 720.5,250.8 720.8,250.5 721.1,250.3 721.3,250.0 721.6,249.8 721.9,249.5 722.1,249.3 722.4,249.1 722.7,248.8 722.9,248.6 723.2,248.4 723.5,248.2 723.7,248.0 724.0,247.9 724.3,247.7 724.5,247.5 724.8,247.4 725.1,247.2 725.3,247.0 725.6,246.9 725.8,246.8 726.1,246.6 726.4,246.5 726.6,246.4 726.9,246.2 727.2,246.1 727.4,246.0 727.7,245.9 728.0,245.8 728.2,245.7 728.5,245.6 728.8,245.5 729.0,245.4 729.3,245.3 729.6,245.2 729.8,245.2 730.1,245.1 730.4,245.0 730.6,244.9 730.9,244.9 731.1,244.8 731.4,244.7 731.7,244.7 731.9,244.6 732.2,244.5 732.5,244.5 732.7,244.4 733.0,244.4 733.3,244.3 733.5,244.3 733.8,244.2 734.1,244.2 734.3,244.1 734.6,244.1 734.9,244.1 735.1,244.0 735.4,244.0 735.6,243.9 735.9,243.9 736.2,243.9 736.4,243.8 736.7,243.8 737.0,243.8 737.2,243.8 737.5,243.7 737.8,243.7 738.0,243.7 738.3,243.6 738.6,243.6 738.8,243.6 739.1,243.6 739.4,243.6 739.6,243.5 739.9,243.5 740.2,243.5 740.4,243.5 740.7,243.5 740.9,243.4 741.2,243.4 741.5,243.4 741.7,243.4 742.0,243.4 742.3,243.4 742.5,243.3 742.8,243.3 743.1,243.3 743.3,243.3 743.6,243.3 743.9,243.3 744.1,243.3 744.4,243.3 744.7,243.2 744.9,243.2 745.2,243.2 745.4,243.2 745.7,243.2 746.0,243.2 746.2,243.2 746.5,243.2 746.8,243.2 747.0,243.2 747.3,243.2 747.6,243.2 747.8,243.1 748.1,243.1 748.4,243.1 748.6,243.1 748.9,243.1 749.2,243.1 749.4,243.1 749.7,243.1 750.0,243.1 750.1,243.1 750.2,248.4 750.5,257.3 750.7,264.4 751.0,270.2 751.3,275.2 751.5,279.4 751.8,283.2 752.1,286.7 752.3,289.9 752.6,293.0 752.9,295.9 753.1,298.8 753.4,301.6 753.7,304.3 753.9,307.0 754.2,309.7 754.5,312.3 754.7,315.0 755.0,317.6 755.3,320.3 755.5,322.9 755.8,325.5 756.0,328.2 756.3,330.8 756.6,333.4 756.8,336.0 757.1,338.6 757.4,341.3 757.6,343.9 757.9,346.5 758.2,349.1 758.4,351.8 758.7,354.4 759.0,357.0 759.2,359.6 759.5,362.2 759.8,364.9 760.0,367.5 760.3,370.1 760.5,372.7 760.8,375.3 761.1,378.0 761.3,380.6 761.6,383.2 761.9,385.8 762.1,388.4 762.4,391.1 762.7,393.7 762.9,396.3 763.2,398.9 763.5,401.5 763.7,404.2 764.0,406.8 764.3,409.4 764.5,412.0 764.8,414.7 765.1,417.3 765.3,419.9 765.6,422.5 765.8,425.1 766.1,427.8 766.4,430.4 766.6,433.0 766.9,435.6 767.2,438.2 767.4,440.9 767.7,443.5 768.0,446.1 768.1,447.4 768.2,446.6 768.5,445.0 768.8,443.4 769.0,441.7 769.3,440.1 769.6,438.5 769.8,436.9 770.1,435.2 770.3,433.6 770.6,432.0 770.9,430.4 771.1,428.7 771.4,427.1 771.7,425.5 771.9,423.9 772.2,422.2 772.5,420.6 772.7,419.0 773.0,417.4 773.3,415.7 773.5,414.1 773.8,412.5 774.1,410.9 774.3,409.2 774.6,407.6 774.9,406.0 775.1,404.4 775.4,402.8 775.6,401.1 775.9,399.5 776.2,397.9 776.4,396.3 776.7,394.6 777.0,393.0 777.2,391.4 777.5,389.8 777.8,388.1 778.0,386.5 778.3,384.9 778.6,383.3 778.8,381.6 779.1,380.0 779.4,378.4 779.6,376.8 779.9,375.1 780.1,373.5 780.4,371.9 780.7,370.3 780.9,368.6 781.2,367.0 781.5,365.4 781.7,363.8 782.0,362.1 782.3,360.5 782.5,358.9 782.8,357.3 783.1,355.7 783.3,354.0 783.6,352.4 783.9,350.8 784.1,349.2 784.4,347.5 784.7,345.9 784.9,344.3 785.2,342.7 785.4,341.0 785.7,339.4 786.0,337.8 786.2,336.2 786.5,334.5 786.8,332.9 787.0,331.3 787.3,329.7 787.6,328.0 787.8,326.4 788.1,324.8 788.4,323.2 788.6,321.6 788.9,319.9 789.2,318.3 789.4,316.7 789.7,315.1 790.0,313.4 790.2,311.8 790.5,310.2 790.7,308.6 791.0,306.9 791.3,305.3 791.5,303.7 791.8,302.1 792.1,300.4 792.3,298.8 792.6,297.2 792.9,295.6 793.1,293.9 793.4,292.3 793.7,290.7 793.9,289.1 794.2,287.4 794.5,285.8 794.7,284.2 795.0,282.6 795.2,281.0 795.5,279.3 795.8,277.7 796.0,276.1 796.3,274.5 796.6,272.8 796.8,271.2 797.1,269.6 797.4,268.0 797.6,266.3 797.9,264.7 798.2,263.3 798.4,262.6 798.7,261.9 799.0,261.2 799.2,260.6 799.5,259.9 799.8,259.3 800.0,258.8 800.3,258.2 800.5,257.6 800.8,257.1 801.1,256.6 801.3,256.1 801.6,255.7 801.9,255.2 802.1,254.8 802.4,254.3 802.7,253.9 802.9,253.5 803.2,253.2 803.5,252.8 803.7,252.5 804.0,252.1 804.3,251.8 804.5,251.5 804.8,251.2 805.0,250.9 805.3,250.6 805.6,250.3 805.8,250.1 806.1,249.8 806.4,249.6 806.6,249.3 806.9,249.1 807.2,248.9 807.4,248.7 807.7,248.5 808.0,248.3 808.2,248.1 808.5,247.9 808.8,247.7 809.0,247.5 809.3,247.4 809.6,247.2 809.8,247.1 810.1,246.9 810.3,246.8 810.6,246.6 810.9,246.5 811.1,246.4 811.4,246.3 811.7,246.1 811.9,246.0 812.2,245.9 812.5,245.8 812.7,245.7 813.0,245.6 813.3,245.5 813.5,245.4 813.8,245.3 814.1,245.3 814.3,245.2 814.6,245.1 814.9,245.0 815.1,244.9 815.4,244.9 815.6,244.8 815.9,244.7 816.2,244.7 816.4,244.6 816.7,244.6 817.0,244.5 817.2,244.4 817.5,244.4 817.8,244.3 818.0,244.3 818.3,244.2 818.6,244.2 818.8,244.2 819.1,244.1 819.4,244.1 819.6,244.0 819.9,244.0 820.1,244.0 820.4,243.9 820.7,243.9 820.9,243.9 821.2,243.8 821.5,243.8 821.7,243.8 822.0,243.7 822.3,243.7 822.5,243.7 822.8,243.7 823.1,243.6 823.3,243.6 823.6,243.6 823.9,243.6 824.1,243.5 824.4,243.5 824.7,243.5 824.9,243.5 825.2,243.5 825.4,243.4 825.7,243.4 826.0,243.4 826.2,243.4 826.5,243.4 826.8,243.4 827.0,243.3 827.3,243.3 827.6,243.3 827.8,243.3 828.1,243.3 828.4,243.3 828.6,243.3 828.9,243.3 829.2,243.2 829.4,243.2 829.7,243.2 829.9,243.2 830.2,243.2 830.5,243.2 830.7,243.2 831.0,243.2 831.3,243.2 831.5,243.2 831.8,243.2 832.1,243.2 832.3,243.1 832.6,243.1 832.9,243.1 833.1,243.1 833.4,243.1 833.7,243.1 833.9,243.1 834.2,243.1 834.5,243.1 834.7,243.1 834.8,243.1 835.0,250.3 835.2,257.9 835.5,263.9 835.8,268.8 836.0,272.8 836.3,276.2 836.6,279.2 836.8,281.8 837.1,284.3 837.4,286.6 837.6,288.8 837.9,290.8 838.2,292.9 838.4,294.9 838.7,296.8 839.0,298.8 839.2,300.7 839.5,302.6 839.7,304.5 840.0,306.4 840.3,308.3 840.5,310.2 840.8,312.1 841.1,314.0 841.3,315.9 841.6,317.8 841.9,319.7 842.1,321.5 842.4,323.4 842.7,325.3 842.9,327.2 843.2,329.1 843.5,331.0 843.7,332.9 844.0,334.8 844.3,336.6 844.5,338.5 844.8,340.4 845.0,342.3 845.3,344.2 845.6,346.1 845.8,348.0 846.1,349.8 846.4,351.7 846.6,353.6 846.9,355.5 847.2,357.4 847.4,359.3 847.7,361.2 848.0,363.1 848.2,364.5 848.2,364.1 848.5,362.4 848.8,360.8 849.0,359.2 849.3,357.6 849.6,355.9 849.8,354.3 850.1,352.7 850.3,351.1 850.6,349.4 850.9,347.8 851.1,346.2 851.4,344.6 851.7,343.0 851.9,341.3 852.2,339.7 852.5,338.1 852.7,336.5 853.0,334.8 853.3,333.2 853.5,331.6 853.8,330.0 854.1,328.3 854.3,326.7 854.6,325.1 854.8,323.5 855.1,321.8 855.4,320.2 855.6,318.6 855.9,317.0 856.2,315.3 856.4,313.7 856.7,312.1 857.0,310.5 857.2,308.8 857.5,307.2 857.8,305.6 858.0,304.0 858.3,302.4 858.6,300.7 858.8,299.1 859.1,297.5 859.4,295.9 859.6,294.2 859.9,292.6 860.1,291.0 860.4,289.4 860.7,287.7 860.9,286.1 861.2,284.5 861.5,282.9 861.7,281.2 862.0,279.6 862.3,278.0 862.5,276.4 862.8,274.7 863.1,273.1 863.3,271.5 863.6,269.9 863.9,268.2 864.1,266.6 864.4,265.0 864.6,263.5 864.9,262.7 865.2,262.0 865.4,261.4 865.7,260.7 866.0,260.1 866.2,259.4 866.5,258.9 866.8,258.3 867.0,257.7 867.3,257.2 867.6,256.7 867.8,256.2 868.1,255.7 868.4,255.3 868.6,254.8 868.9,254.4 869.2,254.0 869.4,253.6 869.7,253.2 869.9,252.9 870.2,252.5 870.5,252.2 870.7,251.8 871.0,251.5 871.3,251.2 871.5,250.9 871.8,250.6 872.1,250.4 872.3,250.1 872.6,249.8 872.9,249.6 873.1,249.4 873.4,249.1 873.7,248.9 873.9,248.7 874.2,248.5 874.5,248.3 874.7,248.1 875.0,247.9 875.2,247.7 875.5,247.6 875.8,247.4 876.0,247.3 876.3,247.1 876.6,247.0 876.8,246.8 877.1,246.7 877.4,246.5 877.6,246.4 877.9,246.3 878.2,246.2 878.4,246.1 878.7,245.9 879.0,245.8 879.2,245.7 879.5,245.6 879.7,245.5 880.0,245.4 880.3,245.4 880.5,245.3 880.8,245.2 881.1,245.1 881.3,245.0 881.6,245.0 881.9,244.9 882.1,244.8 882.4,244.8 882.7,244.7 882.9,244.6 883.2,244.6 883.5,244.5 883.7,244.5 884.0,244.4 884.3,244.4 884.5,244.3 884.8,244.3 885.0,244.2 885.3,244.2 885.6,244.1 885.8,244.1 886.1,244.0 886.4,244.0 886.6,244.0 886.9,243.9 887.2,243.9 887.4,243.9 887.7,243.8 888.0,243.8 888.2,243.8 888.5,243.7 888.8,243.7 889.0,243.7 889.3,243.7 889.5,243.6 889.8,243.6 890.1,243.6 890.3,243.6 890.6,243.5 890.9,243.5 891.1,243.5 891.4,243.5 891.7,243.5 891.9,243.4 892.2,243.4 892.5,243.4 892.7,243.4 893.0,243.4 893.3,243.4 893.5,243.3 893.8,243.3 894.1,243.3 894.3,243.3 894.6,243.3 894.8,243.3 895.1,243.3 895.4,243.3 895.6,243.3 895.9,243.2 896.2,243.2 896.4,243.2 896.7,243.2 897.0,243.2 897.2,243.2 897.5,243.2 897.8,243.2 898.0,243.2 898.3,243.2 898.6,243.2 898.8,243.1" fill="none" stroke="#0072bd" stroke-width="1.4" stroke-linejoin="round"/>
<polyline points="350.5,294.0 350.7,386.1 350.9,302.7 351.1,378.8 351.3,311.4 351.5,371.5 351.7,320.0 351.9,364.3 352.1,328.7 352.3,357.0 352.5,337.4 352.7,349.7 352.9,352.9 353.1,349.6 353.3,349.7 353.5,348.5 353.7,346.8 353.9,346.6 354.1,342.8 354.3,342.6 354.5,342.2 354.7,341.2 354.9,339.0 355.1,337.9 355.3,336.3 355.5,335.0 355.7,334.1 355.9,334.5 356.1,331.6 356.3,330.3 356.5,330.0 356.7,328.8 356.9,327.1 357.1,325.7 357.3,324.9 357.5,323.1 357.7,322.9 357.9,320.5 358.0,319.5 358.2,317.5 358.4,316.8 358.6,315.5 358.8,315.5 359.0,314.0 359.2,313.2 359.4,311.0 359.6,310.4 359.8,309.3 360.0,308.3 360.2,305.5 360.4,305.7 360.6,304.8 360.8,304.1 361.0,303.4 361.2,300.4 361.4,299.0 361.6,298.5 361.8,296.0 362.0,296.0 362.2,294.1 362.4,294.4 362.6,290.4 362.8,291.7 363.0,289.5 363.2,289.7 363.4,287.8 363.6,286.9 363.8,284.1 364.0,283.8 364.2,281.1 364.4,280.3 364.6,279.8 364.8,278.1 365.0,276.5 365.2,275.8 365.4,273.6 365.6,270.8 365.8,273.0 366.0,271.0 366.2,270.6 366.4,268.9 366.6,267.9 366.8,266.3 367.0,268.3 367.2,263.5 367.4,264.2 367.6,265.1 367.8,264.9 368.0,263.3 368.2,259.7 368.4,263.8 368.6,263.6 368.8,258.2 369.0,261.4 369.2,258.2 369.4,257.9 369.6,259.1 369.8,259.7 370.0,259.4 370.2,256.9 370.4,257.6 370.6,259.5 370.8,258.0 371.0,257.2 371.2,255.3 371.4,257.0 371.6,256.8 371.8,255.5 372.0,254.7 372.2,258.2 372.4,254.9 372.6,255.0 372.8,257.3 372.9,256.2 373.1,255.8 373.3,253.7 373.5,255.0 373.7,256.2 373.9,254.4 374.1,254.7 374.3,255.1 374.5,254.7 374.7,252.4 374.9,251.2 375.1,253.3 375.3,250.9 375.5,253.8 375.7,255.6 375.9,252.0 376.1,250.1 376.3,250.0 376.5,253.0 376.7,251.3 376.9,250.8 377.1,250.7 377.3,250.5 377.5,251.9 377.7,248.5 377.9,251.6 378.1,252.8 378.3,251.9 378.5,249.0 378.7,248.5 378.9,250.0 379.1,249.0 379.3,249.7 379.5,253.0 379.7,247.4 379.9,250.2 380.1,246.1 380.3,248.9 380.5,251.1 380.7,247.1 380.9,248.8 381.1,251.1 381.3,250.9 381.5,247.8 381.7,250.6 381.9,249.2 382.1,247.1 382.3,249.7 382.5,248.5 382.7,249.3 382.9,246.7 383.1,246.1 383.3,249.0 383.5,246.8 383.7,246.2 383.9,247.1 384.1,247.9 384.3,248.1 384.5,248.3 384.7,248.1 384.9,246.1 385.1,251.0 385.3,247.3 385.5,246.4 385.7,246.7 385.9,246.5 386.1,247.8 386.3,247.9 386.5,248.5 386.7,245.9 386.9,245.5 387.1,244.3 387.3,246.5 387.5,247.5 387.7,250.5 387.8,244.5 388.0,246.8 388.2,249.3 388.4,246.4 388.6,244.5 388.8,245.9 389.0,248.0 389.2,245.2 389.4,248.2 389.6,247.1 389.8,245.8 390.0,246.3 390.2,247.6 390.4,244.0 390.6,246.6 390.8,246.3 391.0,247.0 391.2,246.0 391.4,246.7 391.6,250.4 391.8,246.0 392.0,247.0 392.2,243.7 392.4,242.9 392.6,244.7 392.8,246.7 393.0,247.0 393.2,247.7 393.4,248.5 393.6,246.8 393.8,247.7 394.0,245.6 394.2,246.0 394.4,245.6 394.6,247.7 394.8,246.0 395.0,243.6 395.2,245.3 395.4,247.3 395.6,248.5 395.8,244.3 396.0,247.6 396.2,247.7 396.4,245.3 396.6,244.2 396.8,245.9 397.0,249.0 397.2,245.0 397.4,247.9 397.6,247.2 397.8,244.1 398.0,246.8 398.2,244.5 398.4,242.6 398.6,246.4 398.8,246.1 399.0,243.5 399.2,248.3 399.4,249.1 399.6,247.0 399.8,245.7 400.0,244.9 400.2,244.7 400.4,250.8 400.6,245.0 400.8,242.9 401.0,245.6 401.2,242.4 401.4,247.2 401.6,249.0 401.8,246.0 402.0,245.1 402.2,244.6 402.4,248.0 402.6,247.9 402.7,247.5 402.9,246.8 403.1,244.8 403.3,245.6 403.5,244.7 403.7,245.8 403.9,244.3 404.1,245.3 404.3,244.9 404.5,244.8 404.7,245.7 404.9,245.1 405.1,246.1 405.3,244.0 405.5,245.8 405.7,242.4 405.9,248.1 406.1,245.6 406.3,244.5 406.5,247.5 406.7,248.5 406.9,245.4 407.1,243.3 407.3,242.5 407.5,243.3 407.7,246.0 407.9,244.3 408.1,248.4 408.3,244.9 408.5,246.9 408.7,242.6 408.9,246.4 409.1,245.3 409.3,244.1 409.5,244.6 409.7,245.5 409.9,247.1 410.1,245.3 410.3,246.4 410.5,246.0 410.7,242.7 410.9,246.0 411.1,245.6 411.3,247.1 411.5,245.6 411.7,247.6 411.9,244.9 412.1,246.5 412.3,243.9 412.5,244.8 412.7,246.1 412.9,243.0 413.1,247.7 413.3,246.1 413.5,245.5 413.7,245.2 413.9,245.8 414.1,244.6 414.3,247.8 414.5,243.4 414.7,248.9 414.9,247.0 415.1,243.9 415.3,245.7 415.5,246.1 415.7,247.2 415.9,246.5 416.1,242.8 416.3,246.9 416.5,245.5 416.7,249.8 416.9,244.4 417.1,247.8 417.3,245.9 417.5,246.0 417.6,245.4 417.8,249.7 418.0,247.9 418.2,246.7 418.4,245.4 418.6,246.1 418.8,245.1 419.0,244.0 419.2,245.3 419.4,246.1 419.6,247.9 419.8,246.9 420.0,246.2 420.2,247.1 420.4,246.1 420.6,246.4 420.8,246.8 421.0,243.6 421.2,242.8 421.4,247.9 421.6,243.6 421.8,249.1 422.0,244.0 422.2,245.5 422.4,247.3 422.6,246.9 422.8,245.0 423.0,245.6 423.2,244.0 423.4,246.6 423.6,244.2 423.8,243.3 424.0,247.7 424.2,245.3 424.4,243.9 424.6,244.7 424.8,247.0 425.0,244.3 425.2,245.9 425.4,244.2 425.6,246.5 425.8,246.6 426.0,246.7 426.2,247.8 426.4,242.4 426.6,244.8 426.8,243.6 427.0,245.6 427.2,246.8 427.4,244.9 427.6,244.9 427.8,242.8 428.0,243.3 428.2,242.4 428.4,243.6 428.6,244.7 428.8,244.9 429.0,244.6 429.2,246.5 429.4,243.0 429.6,261.9 429.8,274.2 430.0,271.1 430.2,277.9 430.4,268.9 430.6,278.6 430.8,281.1 431.0,287.3 431.2,285.9 431.4,292.5 431.6,290.6 431.8,293.7 432.0,302.2 432.2,293.9 432.4,305.6 432.5,295.7 432.7,302.2 432.9,295.3 433.1,310.6 433.3,301.0 433.5,315.7 433.7,310.6 433.9,316.3 434.1,314.2 434.3,330.8 434.5,314.9 434.7,331.8 434.9,327.6 435.1,323.9 435.3,327.8 435.5,325.6 435.7,326.3 435.9,321.6 436.1,321.2 436.3,338.7 436.5,322.7 436.7,348.7 436.9,336.7 437.1,341.5 437.3,353.4 437.5,339.0 437.7,338.6 437.9,350.2 438.1,363.8 438.3,361.8 438.5,360.0 438.7,360.3 438.9,346.3 439.1,357.2 439.3,365.9 439.5,353.9 439.7,353.0 439.9,362.4 440.1,366.0 440.3,378.4 440.5,376.2 440.7,357.2 440.9,366.7 441.1,362.2 441.3,375.1 441.5,369.1 441.7,368.3 441.9,384.9 442.1,378.6 442.3,373.1 442.5,380.2 442.7,376.1 442.9,393.5 443.1,405.6 443.3,381.6 443.5,391.6 443.7,380.2 443.9,400.8 444.1,387.0 444.3,392.0 444.5,408.4 444.7,397.7 444.9,383.5 445.1,403.8 445.3,396.6 445.5,397.4 445.7,405.5 445.9,393.2 446.1,409.9 446.3,421.6 446.5,382.3 446.7,408.2 446.9,402.3 447.1,404.3 447.3,405.0 447.4,394.7 447.6,409.5 447.8,413.0 448.0,413.4 448.2,424.0 448.4,418.4 448.6,424.2 448.8,398.0 448.8,398.0 449.1,433.2 449.4,413.4 449.4,406.0 449.6,418.8 449.8,395.0 449.9,409.6 450.2,424.5 450.4,402.2 450.4,402.2 450.6,399.5 450.8,409.3 451.0,407.5 451.2,406.4 451.4,405.2 451.6,405.1 451.8,403.5 452.0,402.5 452.2,402.3 452.4,400.3 452.6,399.5 452.8,399.3 453.0,398.1 453.2,397.1 453.4,395.9 453.6,394.5 453.8,394.1 454.0,394.8 454.2,392.2 454.4,390.6 454.6,391.3 454.8,391.1 455.0,389.5 455.2,387.6 455.4,388.6 455.6,387.4 455.8,388.0 456.0,386.1 456.2,387.4 456.4,385.0 456.6,384.3 456.8,384.1 457.0,384.1 457.2,382.0 457.4,381.3 457.6,381.8 457.8,383.4 458.0,381.4 458.2,382.0 458.4,380.8 458.6,379.9 458.8,378.8 459.0,378.2 459.2,377.7 459.4,377.0 459.6,376.5 459.8,377.6 460.0,374.8 460.2,374.1 460.4,374.2 460.6,374.4 460.8,374.2 461.0,373.3 461.2,372.0 461.4,369.6 461.6,369.0 461.8,369.8 462.0,368.4 462.2,367.2 462.3,366.0 462.5,366.5 462.7,365.6 462.9,364.9 463.1,364.6 463.3,363.3 463.5,363.4 463.7,362.8 463.9,361.3 464.1,359.6 464.3,358.9 464.5,357.1 464.7,357.8 464.9,358.7 465.1,355.9 465.3,355.6 465.5,354.7 465.7,352.5 465.9,353.6 466.1,352.1 466.3,351.1 466.5,349.5 466.7,348.0 466.9,347.7 467.1,345.0 467.3,346.0 467.5,344.4 467.7,343.4 467.9,342.4 468.1,342.0 468.3,338.6 468.5,341.3 468.7,338.9 468.9,336.4 469.1,337.0 469.3,333.3 469.5,333.3 469.7,334.0 469.9,331.7 470.1,330.9 470.3,329.2 470.5,327.5 470.7,328.5 470.9,323.6 471.1,324.7 471.3,322.4 471.5,321.5 471.7,322.1 471.9,318.8 472.1,317.6 472.3,317.8 472.5,315.9 472.7,316.1 472.9,314.0 473.1,312.8 473.3,313.1 473.5,311.0 473.7,309.7 473.9,307.7 474.1,307.2 474.3,306.1 474.5,304.2 474.7,303.2 474.9,303.1 475.1,300.3 475.3,299.2 475.5,297.9 475.7,298.0 475.9,293.7 476.1,295.1 476.3,294.9 476.5,292.7 476.7,291.0 476.9,290.4 477.1,288.4 477.2,287.9 477.4,286.4 477.6,284.6 477.8,283.2 478.0,282.8 478.2,281.5 478.4,279.0 478.6,279.9 478.8,278.1 479.0,278.1 479.2,276.1 479.4,273.3 479.6,272.6 479.8,272.5 480.0,272.9 480.2,268.0 480.4,268.3 480.6,266.7 480.8,265.3 481.0,267.3 481.2,264.5 481.4,265.6 481.6,263.9 481.8,263.1 482.0,261.3 482.2,260.6 482.4,258.8 482.6,261.3 482.8,261.7 483.0,261.3 483.2,259.4 483.4,260.3 483.6,262.1 483.8,260.3 484.0,259.3 484.2,259.2 484.4,260.7 484.6,256.6 484.8,257.9 485.0,256.0 485.2,255.5 485.4,260.2 485.6,258.6 485.8,259.5 486.0,254.6 486.2,254.7 486.4,256.9 486.6,258.1 486.8,254.3 487.0,255.4 487.2,254.2 487.4,254.6 487.6,255.5 487.8,253.6 488.0,251.4 488.2,253.6 488.4,254.4 488.6,252.3 488.8,250.5 489.0,253.7 489.2,254.1 489.4,250.8 489.6,251.6 489.8,253.1 490.0,253.9 490.2,249.3 490.4,250.7 490.6,250.6 490.8,249.1 491.0,250.3 491.2,250.9 491.4,251.5 491.6,250.1 491.8,251.3 492.0,249.5 492.1,251.2 492.3,249.3 492.5,246.7 492.7,249.2 492.9,251.7 493.1,252.4 493.3,249.0 493.5,251.5 493.7,249.7 493.9,248.4 494.1,250.6 494.3,248.8 494.5,246.5 494.7,247.2 494.9,249.1 495.1,249.4 495.3,246.8 495.5,250.4 495.7,247.0 495.9,248.7 496.1,247.0 496.3,246.2 496.5,249.7 496.7,247.7 496.9,248.2 497.1,247.8 497.3,248.5 497.5,247.5 497.7,247.2 497.9,248.6 498.1,246.7 498.3,246.4 498.5,246.2 498.7,247.8 498.9,248.3 499.1,248.3 499.3,247.8 499.5,246.5 499.7,246.2 499.9,248.1 500.1,248.7 500.3,245.1 500.5,248.0 500.7,248.3 500.9,248.3 501.1,244.0 501.3,246.7 501.5,247.4 501.7,247.6 501.9,245.9 502.1,245.4 502.3,249.4 502.5,244.7 502.7,246.9 502.9,246.9 503.1,245.4 503.3,244.9 503.5,248.2 503.7,245.8 503.9,247.0 504.1,247.4 504.3,243.7 504.5,247.1 504.7,246.1 504.9,243.7 505.1,246.3 505.3,245.3 505.5,248.5 505.7,247.7 505.9,245.0 506.1,244.1 506.3,248.0 506.5,247.2 506.7,246.6 506.9,248.3 507.0,245.1 507.2,245.8 507.4,244.3 507.6,245.2 507.8,248.4 508.0,247.8 508.2,245.6 508.4,242.4 508.6,244.6 508.8,246.7 509.0,244.9 509.2,243.7 509.4,246.3 509.6,245.1 509.8,244.5 510.0,244.8 510.2,247.2 510.4,247.7 510.6,248.3 510.8,246.8 511.0,246.2 511.2,243.3 511.4,246.3 511.6,245.1 511.8,244.2 512.0,244.5 512.2,246.3 512.4,245.4 512.6,246.6 512.8,247.4 513.0,245.3 513.2,246.6 513.4,248.2 513.6,243.5 513.8,244.6 514.0,242.9 514.2,243.8 514.4,246.3 514.6,245.4 514.8,250.6 515.0,247.5 515.2,245.5 515.4,245.7 515.6,246.8 515.8,246.0 516.0,248.2 516.2,249.4 516.4,271.6 516.6,271.1 516.8,281.4 517.0,271.5 517.2,277.1 517.4,277.6 517.6,283.0 517.8,278.1 518.0,281.4 518.2,286.2 518.4,278.8 518.6,285.1 518.8,282.2 519.0,284.0 519.2,288.2 519.4,288.6 519.6,282.4 519.8,291.4 520.0,295.0 520.2,307.2 520.4,298.7 520.6,307.4 520.8,298.6 521.0,302.7 521.2,315.9 521.4,307.6 521.6,302.1 521.8,303.9 521.9,309.5 522.1,309.8 522.3,302.0 522.5,309.2 522.7,309.3 522.9,316.4 523.1,320.2 523.3,317.8 523.5,318.1 523.7,322.6 523.9,316.8 524.1,328.3 524.3,318.0 524.5,316.0 524.7,329.6 524.9,329.4 525.1,325.0 525.3,330.9 525.5,334.3 525.7,333.2 525.9,339.1 526.1,340.5 526.3,334.7 526.5,336.0 526.7,349.7 526.9,340.0 527.1,344.6 527.3,331.4 527.5,360.0 527.7,342.4 527.9,345.5 528.1,346.1 528.3,342.1 528.5,350.9 528.7,348.3 528.9,340.7 529.0,343.6 529.3,367.4 529.6,353.4 529.7,338.0 529.9,347.8 530.1,349.2 530.3,336.7 530.5,344.5 530.7,344.9 530.9,345.3 531.1,343.6 531.3,342.0 531.5,340.6 531.7,341.2 531.9,338.8 532.1,335.6 532.3,336.4 532.5,334.9 532.7,332.1 532.9,331.3 533.1,330.8 533.3,327.7 533.5,328.6 533.7,326.4 533.9,326.5 534.1,324.6 534.3,323.3 534.5,322.4 534.7,321.2 534.9,321.0 535.1,319.0 535.3,318.8 535.5,317.5 535.7,315.0 535.9,314.1 536.1,312.9 536.3,311.7 536.5,308.8 536.7,309.8 536.8,309.2 537.0,305.8 537.2,305.5 537.4,304.4 537.6,303.9 537.8,301.1 538.0,300.0 538.2,300.7 538.4,296.6 538.6,298.8 538.8,294.0 539.0,295.5 539.2,292.9 539.4,292.5 539.6,291.0 539.8,287.9 540.0,287.1 540.2,287.9 540.4,285.5 540.6,283.8 540.8,283.6 541.0,283.4 541.2,280.9 541.4,278.9 541.6,277.5 541.8,275.8 542.0,275.3 542.2,275.8 542.4,275.2 542.6,273.1 542.8,272.1 543.0,269.2 543.2,268.9 543.4,266.8 543.6,267.8 543.8,265.2 544.0,268.0 544.2,266.1 544.4,266.2 544.6,263.5 544.8,263.0 545.0,262.2 545.2,259.7 545.4,261.1 545.6,262.9 545.8,264.4 546.0,259.5 546.2,256.9 546.4,258.9 546.6,260.3 546.8,260.4 547.0,259.4 547.2,258.2 547.4,258.7 547.6,257.2 547.8,258.2 548.0,259.6 548.2,258.2 548.4,255.3 548.6,254.6 548.8,259.1 549.0,258.9 549.2,256.3 549.4,256.9 549.6,254.4 549.8,253.7 550.0,255.5 550.2,253.1 550.4,253.7 550.6,256.0 550.8,254.5 551.0,252.1 551.2,255.0 551.4,254.0 551.6,255.0 551.7,253.5 551.9,252.6 552.1,251.2 552.3,252.8 552.5,251.6 552.7,252.3 552.9,251.1 553.1,251.0 553.3,250.4 553.5,252.7 553.7,247.6 553.9,251.8 554.1,254.2 554.3,248.4 554.5,250.6 554.7,249.0 554.9,251.8 555.1,250.9 555.3,252.6 555.5,248.9 555.7,246.7 555.9,247.7 556.1,250.5 556.3,248.4 556.5,248.9 556.7,249.9 556.9,249.6 557.1,250.3 557.3,246.2 557.5,248.1 557.7,249.7 557.9,248.6 558.1,249.4 558.3,249.1 558.5,249.1 558.7,249.1 558.9,250.8 559.1,248.6 559.3,248.7 559.5,246.8 559.7,249.1 559.9,246.8 560.1,245.0 560.3,248.6 560.5,248.5 560.7,250.1 560.9,247.5 561.1,247.8 561.3,247.1 561.5,248.8 561.7,248.6 561.9,243.8 562.1,244.9 562.3,248.5 562.5,247.2 562.7,246.5 562.9,247.6 563.1,246.4 563.3,247.8 563.5,246.2 563.7,246.5 563.9,243.2 564.1,249.1 564.3,249.9 564.5,247.0 564.7,245.3 564.9,247.5 565.1,247.5 565.3,246.0 565.5,247.8 565.7,248.0 565.9,249.2 566.1,249.4 566.3,247.8 566.5,245.4 566.6,246.6 566.8,246.6 567.0,248.2 567.2,247.5 567.4,247.6 567.6,247.7 567.8,245.7 568.0,247.8 568.2,245.7 568.4,247.8 568.6,249.2 568.8,243.2 569.0,248.5 569.2,246.1 569.4,248.7 569.6,246.7 569.8,247.5 570.0,244.8 570.2,245.9 570.4,246.2 570.6,246.7 570.8,244.6 571.0,245.8 571.2,246.4 571.4,247.5 571.6,245.2 571.8,245.0 572.0,245.6 572.2,246.4 572.4,244.2 572.6,246.3 572.8,247.7 573.0,245.6 573.2,246.5 573.4,248.5 573.6,243.6 573.8,244.8 574.0,244.4 574.2,243.8 574.4,245.6 574.6,246.6 574.8,245.4 575.0,247.0 575.2,248.3 575.4,247.0 575.6,244.5 575.8,246.7 576.0,245.3 576.2,247.2 576.4,247.5 576.6,245.4 576.8,247.1 577.0,244.3 577.2,244.6 577.4,244.5 577.6,245.5 577.8,246.2 578.0,245.2 578.2,248.2 578.4,247.0 578.6,244.0 578.8,246.1 579.0,246.6 579.2,246.6 579.4,246.7 579.6,248.8 579.8,248.0 580.0,245.2 580.2,247.5 580.4,246.1 580.6,246.7 580.8,244.7 581.0,242.9 581.2,246.5 581.4,247.1 581.5,245.6 581.7,246.9 581.9,246.7 582.1,246.3 582.3,245.4 582.5,242.4 582.7,249.1 582.9,245.8 583.1,245.4 583.3,250.2 583.5,243.3 583.7,246.7 583.9,246.7 584.1,247.7 584.3,247.9 584.5,249.4 584.7,247.6 584.9,246.8 585.1,247.9 585.3,246.0 585.5,244.5 585.7,244.2 585.9,244.7 586.1,244.9 586.3,247.5 586.5,247.6 586.7,245.5 586.9,245.1 587.1,245.5 587.3,247.4 587.5,246.2 587.7,247.2 587.9,243.2 588.1,247.2 588.3,244.8 588.5,246.6 588.7,246.1 588.9,260.4 589.1,264.9 589.3,271.6 589.5,283.8 589.7,274.3 589.9,283.1 590.1,282.8 590.3,290.2 590.5,286.7 590.7,288.5 590.9,294.4 591.1,291.6 591.3,299.8 591.5,296.8 591.7,304.1 591.9,300.0 592.1,299.5 592.3,299.5 592.5,306.1 592.7,309.8 592.9,308.1 593.1,308.4 593.3,306.7 593.5,310.5 593.7,316.7 593.9,321.0 593.9,308.9 594.2,302.7 594.5,315.1 594.5,315.1 594.7,322.7 594.9,327.9 595.1,320.7 595.3,325.0 595.5,335.6 595.7,334.6 595.9,333.9 596.1,332.6 596.3,332.4 596.4,336.0 596.6,339.1 596.8,341.9 597.0,347.8 597.2,332.9 597.4,343.0 597.6,347.0 597.8,350.9 598.0,357.2 598.2,353.0 598.4,368.0 598.6,364.5 598.8,357.9 599.0,359.5 599.2,357.9 599.4,363.2 599.6,362.6 599.8,362.3 600.0,370.7 600.2,354.9 600.4,367.0 600.6,369.9 600.8,361.5 601.0,357.7 601.2,388.7 601.4,368.8 601.6,362.3 601.8,370.3 602.0,377.7 602.2,369.5 602.4,378.1 602.6,380.4 602.8,381.6 603.0,369.7 603.2,375.1 603.4,387.7 603.6,407.0 603.8,382.9 604.0,383.4 604.2,389.1 604.4,396.5 604.6,397.6 604.8,397.0 605.0,378.1 605.2,390.6 605.4,403.2 605.6,396.1 605.8,383.8 606.0,392.6 606.2,408.0 606.4,400.6 606.6,400.3 606.8,401.5 607.0,407.4 607.2,394.0 607.4,394.0 607.6,410.1 607.8,394.1 608.0,406.6 608.0,405.7 608.3,415.8 608.6,398.5 608.6,398.5 608.8,417.4 609.0,398.5 609.2,398.8 609.4,382.3 609.6,392.5 609.8,381.8 610.0,391.4 610.2,400.6 610.4,399.5 610.6,397.8 610.8,398.7 611.0,396.4 611.2,395.8 611.3,393.3 611.5,394.1 611.7,393.0 611.9,394.1 612.1,392.8 612.3,391.7 612.5,389.6 612.7,391.7 612.9,389.7 613.1,388.1 613.3,387.3 613.5,388.6 613.7,387.9 613.9,388.6 614.1,385.6 614.3,386.1 614.5,384.4 614.7,383.0 614.9,384.2 615.1,382.1 615.3,382.7 615.5,382.7 615.7,382.0 615.9,381.0 616.1,380.8 616.3,381.2 616.5,379.5 616.7,379.1 616.9,378.2 617.1,376.3 617.3,375.7 617.5,375.3 617.7,375.3 617.9,375.9 618.1,374.1 618.3,372.0 618.5,371.6 618.7,371.9 618.9,372.6 619.1,369.0 619.3,368.4 619.5,368.2 619.7,366.5 619.9,367.2 620.1,365.2 620.3,363.8 620.5,361.6 620.7,361.9 620.9,360.7 621.1,359.0 621.3,358.7 621.5,357.8 621.7,358.3 621.9,357.4 622.1,354.4 622.3,352.0 622.5,353.7 622.7,352.4 622.9,353.0 623.1,349.7 623.3,348.7 623.5,348.2 623.7,347.6 623.9,343.9 624.1,344.9 624.3,343.0 624.5,341.8 624.7,340.8 624.9,340.8 625.1,338.5 625.3,335.2 625.5,336.6 625.7,334.4 625.9,332.0 626.1,331.7 626.2,330.6 626.4,329.9 626.6,328.4 626.8,325.5 627.0,327.4 627.2,326.3 627.4,327.3 627.6,323.1 627.8,321.8 628.0,321.5 628.2,320.1 628.4,318.5 628.6,316.9 628.8,315.5 629.0,313.7 629.2,313.1 629.4,313.3 629.6,309.8 629.8,308.7 630.0,308.5 630.2,306.3 630.4,305.1 630.6,306.0 630.8,303.2 631.0,301.0 631.2,300.9 631.4,298.8 631.6,298.1 631.8,295.6 632.0,294.8 632.2,294.2 632.4,294.2 632.6,291.4 632.8,287.9 633.0,290.1 633.2,288.8 633.4,287.1 633.6,285.8 633.8,285.0 634.0,284.4 634.2,282.5 634.4,283.2 634.6,281.2 634.8,279.7 635.0,277.2 635.2,274.4 635.4,276.0 635.6,274.6 635.8,271.9 636.0,271.5 636.2,270.3 636.4,270.6 636.6,268.0 636.8,266.9 637.0,265.8 637.2,266.7 637.4,265.0 637.6,263.3 637.8,261.5 638.0,262.0 638.2,263.3 638.4,260.3 638.6,262.2 638.8,259.5 639.0,263.5 639.2,262.0 639.4,260.5 639.6,262.2 639.8,259.6 640.0,260.1 640.2,260.3 640.4,261.9 640.6,257.0 640.8,259.6 641.0,259.0 641.1,258.5 641.3,257.7 641.5,255.7 641.7,255.6 641.9,257.1 642.1,256.4 642.3,254.2 642.5,254.2 642.7,253.8 642.9,253.8 643.1,253.6 643.3,256.7 643.5,253.2 643.7,252.0 643.9,253.7 644.1,253.4 644.3,255.1 644.5,254.7 644.7,253.1 644.9,253.2 645.1,253.1 645.3,250.6 645.5,253.3 645.7,251.9 645.9,249.3 646.1,254.1 646.3,247.3 646.5,250.9 646.7,251.4 646.9,252.5 647.1,251.2 647.3,251.0 647.5,252.1 647.7,252.9 647.9,250.4 648.1,251.9 648.3,249.2 648.5,252.7 648.7,248.8 648.9,252.1 649.1,248.8 649.3,244.9 649.5,250.2 649.7,249.4 649.9,250.1 650.1,252.3 650.3,249.6 650.5,248.3 650.7,247.1 650.9,247.5 651.1,249.4 651.3,250.3 651.5,248.8 651.7,245.1 651.9,247.2 652.1,248.1 652.3,248.7 652.5,248.8 652.7,247.6 652.9,247.0 653.1,251.6 653.3,249.2 653.5,249.7 653.7,247.0 653.9,247.0 654.1,250.4 654.3,250.4 654.5,248.0 654.7,244.8 654.9,247.4 655.1,246.2 655.3,245.2 655.5,247.1 655.7,246.5 655.9,247.6 656.0,248.2 656.2,246.9 656.4,248.3 656.6,248.4 656.8,246.7 657.0,246.4 657.2,246.1 657.4,248.4 657.6,246.3 657.8,243.7 658.0,248.5 658.2,243.9 658.4,246.9 658.6,247.2 658.8,245.7 659.0,246.9 659.2,246.9 659.4,245.6 659.6,245.3 659.8,246.9 660.0,247.8 660.2,247.2 660.4,244.8 660.6,245.1 660.8,248.3 661.0,245.7 661.2,248.5 661.4,247.6 661.6,245.5 661.8,247.8 662.0,245.2 662.2,246.9 662.4,246.8 662.6,246.4 662.8,247.5 663.0,246.5 663.2,246.7 663.4,245.5 663.6,246.3 663.8,246.2 664.0,248.3 664.2,247.5 664.4,249.7 664.6,242.9 664.8,248.2 665.0,248.3 665.2,247.2 665.4,244.6 665.6,246.1 665.8,243.7 666.0,244.2 666.2,245.9 666.4,246.3 666.6,246.8 666.8,245.9 667.0,244.8 667.2,245.4 667.4,247.3 667.6,246.7 667.8,245.7 668.0,246.3 668.2,245.4 668.4,244.1 668.6,245.3 668.8,245.2 669.0,244.9 669.2,244.8 669.4,244.7 669.6,247.5 669.8,246.3 670.0,246.7 670.2,245.0 670.4,242.4 670.6,245.1 670.8,244.8 670.9,243.6 671.1,244.7 671.3,246.4 671.5,246.7 671.7,244.6 671.9,244.9 672.1,247.9 672.3,247.1 672.5,248.7 672.7,248.0 672.9,243.6 673.1,245.7 673.3,247.4 673.5,244.4 673.7,245.2 673.9,246.4 674.1,245.8 674.3,261.7 674.5,266.4 674.7,274.2 674.9,276.9 675.1,278.4 675.3,280.7 675.5,286.8 675.7,286.6 675.9,291.2 676.1,291.6 676.3,292.0 676.5,294.6 676.7,297.9 676.9,304.8 677.1,299.9 677.3,310.2 677.5,304.1 677.7,316.6 677.9,315.1 678.1,316.7 678.3,312.9 678.5,317.2 678.7,316.1 678.9,307.4 679.1,327.7 679.3,323.2 679.5,322.2 679.7,336.4 679.9,341.5 680.1,330.9 680.3,335.4 680.5,338.7 680.7,334.3 680.9,344.8 681.1,346.0 681.3,336.1 681.5,357.0 681.7,345.6 681.9,352.3 682.1,341.1 682.3,353.3 682.5,354.2 682.7,353.8 682.9,348.2 683.1,349.4 683.3,363.2 683.5,361.8 683.7,380.2 683.9,366.6 684.1,363.4 684.3,362.1 684.5,377.8 684.7,374.4 684.9,398.9 685.1,379.9 685.3,376.3 685.5,377.3 685.7,385.4 685.8,374.3 686.0,380.3 686.2,386.9 686.4,369.8 686.6,374.5 686.6,374.5 686.9,408.8 687.2,356.9 687.2,370.7 687.4,382.7 687.6,377.6 687.7,386.5 688.0,415.8 688.2,401.5 688.2,401.5 688.4,395.5 688.6,379.8 688.8,385.2 689.0,392.5 689.2,378.6 689.4,388.1 689.6,390.2 689.8,390.4 690.0,387.4 690.2,386.9 690.4,386.6 690.6,385.4 690.8,384.0 691.0,382.3 691.2,383.8 691.4,381.5 691.6,379.8 691.8,380.5 692.0,378.7 692.2,376.1 692.4,378.2 692.6,378.3 692.8,377.7 693.0,376.7 693.2,374.5 693.4,375.1 693.6,375.4 693.8,373.0 694.0,372.1 694.2,371.4 694.4,371.7 694.6,371.1 694.8,370.8 695.0,368.6 695.2,370.5 695.4,370.0 695.6,367.7 695.8,369.0 696.0,368.2 696.2,366.0 696.4,367.9 696.6,365.6 696.8,365.2 697.0,365.2 697.2,363.6 697.4,361.6 697.6,360.5 697.8,360.5 698.0,360.1 698.2,358.5 698.4,357.6 698.6,358.5 698.8,357.9 699.0,355.7 699.2,354.4 699.4,354.9 699.6,350.5 699.8,352.3 700.0,350.0 700.2,350.1 700.4,348.9 700.6,347.7 700.7,345.4 700.9,344.9 701.1,344.5 701.3,342.3 701.5,342.4 701.7,340.9 701.9,339.0 702.1,340.2 702.3,337.2 702.5,336.5 702.7,335.7 702.9,334.0 703.1,333.5 703.3,331.7 703.5,330.9 703.7,329.0 703.9,329.5 704.1,327.1 704.3,324.1 704.5,323.9 704.7,323.8 704.9,322.6 705.1,321.0 705.3,319.3 705.5,318.7 705.7,318.1 705.9,316.1 706.1,313.2 706.3,312.2 706.5,312.2 706.7,309.4 706.9,309.3 707.1,307.0 707.3,309.2 707.5,306.9 707.7,305.5 707.9,303.9 708.1,302.6 708.3,301.2 708.5,300.7 708.7,297.5 708.9,298.9 709.1,295.3 709.3,295.9 709.5,294.0 709.7,293.4 709.9,291.7 710.1,290.1 710.3,288.7 710.5,289.1 710.7,287.4 710.9,283.6 711.1,285.0 711.3,285.1 711.5,283.8 711.7,280.2 711.9,280.9 712.1,278.5 712.3,275.8 712.5,275.7 712.7,275.5 712.9,272.5 713.1,271.6 713.3,270.7 713.5,269.7 713.7,267.7 713.9,268.7 714.1,265.2 714.3,267.0 714.5,264.1 714.7,261.7 714.9,262.7 715.1,264.4 715.3,261.3 715.5,263.3 715.6,260.5 715.8,263.3 716.0,262.0 716.2,259.8 716.4,261.1 716.6,258.3 716.8,258.6 717.0,259.2 717.2,255.8 717.4,259.2 717.6,259.5 717.8,259.1 718.0,258.4 718.2,255.7 718.4,256.1 718.6,255.9 718.8,253.6 719.0,257.4 719.2,259.1 719.4,252.2 719.6,254.8 719.8,255.7 720.0,255.3 720.2,253.9 720.4,255.9 720.6,254.7 720.8,253.3 721.0,256.7 721.2,255.8 721.4,256.9 721.6,254.6 721.8,254.1 722.0,255.6 722.2,251.4 722.4,254.5 722.6,253.0 722.8,250.0 723.0,251.5 723.2,251.7 723.4,250.8 723.6,250.5 723.8,250.1 724.0,250.5 724.2,251.9 724.4,250.8 724.6,249.5 724.8,251.7 725.0,250.6 725.2,250.8 725.4,251.0 725.6,248.9 725.8,252.4 726.0,248.7 726.2,250.2 726.4,249.0 726.6,250.0 726.8,248.9 727.0,249.0 727.2,248.9 727.4,248.4 727.6,247.2 727.8,248.9 728.0,247.8 728.2,247.3 728.4,250.5 728.6,248.2 728.8,245.8 729.0,250.5 729.2,250.0 729.4,246.8 729.6,244.4 729.8,248.4 730.0,248.6 730.2,246.2 730.4,247.6 730.5,248.7 730.7,248.2 730.9,249.5 731.1,247.5 731.3,247.7 731.5,248.6 731.7,245.8 731.9,248.6 732.1,246.8 732.3,246.5 732.5,248.3 732.7,247.7 732.9,246.9 733.1,248.4 733.3,246.4 733.5,243.0 733.7,247.3 733.9,245.1 734.1,247.1 734.3,245.2 734.5,250.6 734.7,247.1 734.9,248.5 735.1,244.7 735.3,244.0 735.5,247.1 735.7,246.4 735.9,247.2 736.1,249.1 736.3,245.4 736.5,245.8 736.7,247.3 736.9,245.0 737.1,248.1 737.3,245.9 737.5,245.6 737.7,248.1 737.9,246.1 738.1,246.7 738.3,246.0 738.5,247.4 738.7,245.9 738.9,247.9 739.1,248.9 739.3,245.2 739.5,246.6 739.7,244.4 739.9,246.9 740.1,244.6 740.3,246.3 740.5,243.8 740.7,246.4 740.9,246.6 741.1,247.2 741.3,247.4 741.5,246.3 741.7,245.9 741.9,246.1 742.1,248.1 742.3,245.7 742.5,246.5 742.7,246.0 742.9,244.4 743.1,246.3 743.3,244.8 743.5,243.8 743.7,245.3 743.9,248.2 744.1,246.6 744.3,246.0 744.5,245.8 744.7,247.9 744.9,244.8 745.1,246.8 745.3,246.1 745.4,245.2 745.6,244.7 745.8,244.3 746.0,248.0 746.2,245.6 746.4,242.7 746.6,243.6 746.8,246.1 747.0,247.1 747.2,246.5 747.4,247.0 747.6,246.3 747.8,242.4 748.0,245.9 748.2,243.8 748.4,245.6 748.6,242.4 748.8,242.4 749.0,244.0 749.2,245.1 749.4,244.6 749.6,244.6 749.8,246.1 750.0,245.0 750.2,259.1 750.4,278.8 750.6,280.8 750.8,276.4 751.0,273.0 751.2,284.4 751.4,281.8 751.6,287.1 751.8,295.3 752.0,285.4 752.2,286.4 752.4,294.2 752.6,298.3 752.8,299.3 752.9,299.7 753.1,285.3 753.4,314.0 753.4,314.0 753.6,316.3 753.8,301.6 754.0,323.6 754.2,312.6 754.4,319.4 754.6,317.5 754.8,312.0 755.0,314.8 755.2,327.6 755.4,334.7 755.6,326.0 755.8,322.8 756.0,333.7 756.2,325.2 756.4,324.4 756.6,337.3 756.8,349.5 757.0,344.1 757.2,343.1 757.4,361.4 757.6,353.1 757.8,351.6 758.0,357.1 758.2,346.2 758.4,364.3 758.6,359.9 758.8,346.8 759.0,360.4 759.2,348.5 759.4,355.3 759.6,366.5 759.8,379.4 760.0,377.3 760.2,380.5 760.3,374.0 760.5,365.2 760.7,374.8 760.9,371.3 761.1,369.6 761.3,370.7 761.5,367.3 761.7,385.4 761.9,373.8 762.1,373.8 762.3,374.3 762.5,382.9 762.7,385.2 762.9,377.6 763.1,382.4 763.3,388.3 763.5,387.7 763.7,371.8 763.9,388.7 764.1,386.0 764.3,391.9 764.5,403.0 764.7,389.1 764.9,393.2 765.1,401.5 765.3,405.7 765.5,404.6 765.7,398.4 765.9,397.2 766.1,399.1 766.3,415.4 766.5,403.3 766.7,397.7 766.9,414.0 767.1,407.2 767.3,416.6 767.3,416.6 767.6,427.4 767.8,412.1 767.9,411.3 768.1,397.6 768.2,397.8 768.5,421.6 768.8,397.1 768.9,398.3 769.1,408.6 769.3,402.6 769.5,405.2 769.7,402.2 769.9,402.1 770.1,399.2 770.3,398.3 770.5,399.1 770.7,399.0 770.9,397.1 771.1,395.0 771.3,395.8 771.5,395.2 771.7,395.2 771.9,394.2 772.1,395.0 772.3,395.0 772.5,393.9 772.7,393.3 772.9,393.1 773.1,395.3 773.3,392.5 773.5,391.6 773.7,392.2 773.9,391.9 774.1,390.3 774.3,390.7 774.5,390.2 774.7,389.1 774.9,390.6 775.1,389.6 775.2,388.0 775.4,388.6 775.6,389.6 775.8,387.7 776.0,389.4 776.2,386.3 776.4,386.7 776.6,386.8 776.8,386.9 777.0,383.4 777.2,385.6 777.4,386.6 777.6,384.7 777.8,383.2 778.0,383.2 778.2,380.4 778.4,380.5 778.6,381.6 778.8,379.5 779.0,379.6 779.2,378.5 779.4,377.5 779.6,379.9 779.8,376.7 780.0,375.2 780.2,375.7 780.4,376.7 780.6,372.5 780.8,373.2 781.0,370.5 781.2,369.6 781.4,369.1 781.6,369.0 781.8,366.5 782.0,364.6 782.2,365.6 782.4,364.9 782.6,361.8 782.8,361.7 783.0,361.2 783.2,357.9 783.4,359.0 783.6,356.2 783.8,355.5 784.0,353.7 784.2,353.2 784.4,350.9 784.6,351.2 784.8,350.5 785.0,349.0 785.2,347.3 785.4,347.8 785.6,346.0 785.8,345.1 786.0,340.7 786.2,340.8 786.4,340.9 786.6,339.4 786.8,339.0 787.0,335.8 787.2,335.5 787.4,334.4 787.6,332.1 787.8,332.0 788.0,332.2 788.2,331.4 788.4,328.1 788.6,326.9 788.8,326.3 789.0,323.9 789.2,324.7 789.4,321.8 789.6,321.2 789.8,320.5 790.0,318.9 790.1,317.5 790.3,316.7 790.5,315.8 790.7,313.0 790.9,312.0 791.1,311.4 791.3,309.9 791.5,310.3 791.7,306.3 791.9,307.0 792.1,306.4 792.3,303.8 792.5,302.9 792.7,302.0 792.9,299.1 793.1,299.6 793.3,299.0 793.5,297.9 793.7,297.0 793.9,294.1 794.1,294.0 794.3,291.9 794.5,291.8 794.7,290.7 794.9,288.4 795.1,285.9 795.3,286.5 795.5,286.1 795.7,284.5 795.9,283.6 796.1,280.7 796.3,279.1 796.5,277.5 796.7,277.4 796.9,275.2 797.1,274.4 797.3,274.9 797.5,270.8 797.7,270.8 797.9,271.9 798.1,269.5 798.3,268.1 798.5,267.8 798.7,267.0 798.9,265.0 799.1,266.5 799.3,263.9 799.5,265.4 799.7,265.1 799.9,263.4 800.1,261.4 800.3,262.8 800.5,259.8 800.7,258.7 800.9,260.0 801.1,256.9 801.3,259.3 801.5,256.7 801.7,258.9 801.9,260.1 802.1,258.5 802.3,259.1 802.5,257.8 802.7,254.3 802.9,257.7 803.1,259.2 803.3,254.8 803.5,255.8 803.7,258.2 803.9,255.0 804.1,256.5 804.3,252.9 804.5,255.8 804.7,254.5 804.9,258.0 805.0,253.4 805.2,253.8 805.4,252.8 805.6,252.8 805.8,252.3 806.0,251.3 806.2,252.9 806.4,251.9 806.6,252.4 806.8,254.5 807.0,253.5 807.2,250.8 807.4,249.5 807.6,251.7 807.8,251.1 808.0,251.0 808.2,253.7 808.4,250.3 808.6,248.9 808.8,252.5 809.0,254.4 809.2,252.2 809.4,249.8 809.6,247.3 809.8,249.7 810.0,247.6 810.2,249.3 810.4,247.8 810.6,247.4 810.8,249.3 811.0,245.1 811.2,249.1 811.4,248.6 811.6,250.2 811.8,249.1 812.0,251.3 812.2,249.3 812.4,246.8 812.6,249.8 812.8,246.1 813.0,249.7 813.2,248.7 813.4,250.5 813.6,247.2 813.8,252.4 814.0,248.9 814.2,246.4 814.4,249.5 814.6,247.4 814.8,248.2 815.0,246.9 815.2,249.4 815.4,247.4 815.6,249.0 815.8,245.7 816.0,247.8 816.2,248.1 816.4,246.2 816.6,245.5 816.8,246.5 817.0,249.6 817.2,252.1 817.4,249.1 817.6,248.0 817.8,244.9 818.0,247.9 818.2,247.3 818.4,248.3 818.6,246.1 818.8,246.5 819.0,245.4 819.2,246.5 819.4,245.1 819.6,245.0 819.8,247.7 819.9,242.4 820.1,245.6 820.3,248.0 820.5,247.2 820.7,244.0 820.9,246.1 821.1,246.9 821.3,245.9 821.5,250.0 821.7,250.1 821.9,247.5 822.1,246.6 822.3,247.6 822.5,248.0 822.7,249.5 822.9,245.8 823.1,244.6 823.3,244.6 823.5,246.0 823.7,248.1 823.9,247.0 824.1,245.6 824.3,243.2 824.5,245.9 824.7,247.7 824.9,247.4 825.1,245.8 825.3,247.1 825.5,249.9 825.7,244.8 825.9,245.7 826.1,246.8 826.3,244.2 826.5,248.2 826.7,246.7 826.9,247.2 827.1,247.2 827.3,247.6 827.5,242.4 827.7,246.8 827.9,244.9 828.1,247.8 828.3,244.9 828.5,246.0 828.7,245.3 828.9,248.4 829.1,247.9 829.3,247.1 829.5,245.7 829.7,245.3 829.9,245.5 830.1,248.8 830.3,247.0 830.5,244.8 830.7,242.9 830.9,247.2 831.1,247.2 831.3,247.5 831.5,245.9 831.7,245.2 831.9,245.9 832.1,245.0 832.3,244.2 832.5,245.2 832.7,244.1 832.9,244.4 833.1,246.8 833.3,244.6 833.5,247.3 833.7,248.0 833.9,243.5 834.1,244.0 834.3,246.4 834.5,246.5 834.7,245.3 834.8,260.8 835.0,264.5 835.2,274.8 835.4,270.0 835.6,278.3 835.8,279.3 836.0,277.2 836.2,276.1 836.4,283.8 836.6,283.1 836.8,283.3 837.0,285.6 837.2,279.5 837.5,286.3 837.6,288.9 837.8,300.6 838.0,297.7 838.2,297.6 838.4,294.1 838.6,298.5 838.8,297.2 839.0,298.4 839.2,301.3 839.4,318.6 839.6,299.0 839.8,307.2 840.0,315.9 840.2,309.0 840.4,314.8 840.6,315.5 840.8,318.4 841.0,315.6 841.2,329.9 841.4,317.5 841.6,315.6 841.8,317.7 842.0,329.6 842.2,323.0 842.4,334.2 842.6,321.5 842.8,322.0 843.0,324.9 843.2,334.3 843.4,329.8 843.6,335.4 843.8,339.0 844.0,332.9 844.2,335.6 844.4,338.8 844.6,344.6 844.8,349.1 845.0,341.8 845.2,353.0 845.4,353.4 845.6,350.2 845.8,348.2 846.0,356.8 846.2,359.5 846.4,343.3 846.6,356.8 846.8,366.4 847.0,354.9 847.2,356.4 847.4,345.4 847.6,355.8 847.8,361.7 847.8,361.7 848.0,389.7 848.3,363.3 848.4,376.9 848.6,356.6 848.8,352.0 849.0,352.2 849.2,365.0 849.4,364.9 849.6,363.0 849.7,360.2 849.9,359.2 850.1,357.3 850.3,356.6 850.5,353.5 850.7,356.5 850.9,353.1 851.1,351.4 851.3,350.4 851.5,350.4 851.7,347.8 851.9,347.1 852.1,346.3 852.3,344.9 852.5,344.4 852.7,342.3 852.9,340.4 853.1,339.4 853.3,338.6 853.5,338.9 853.7,335.4 853.9,334.9 854.1,333.8 854.3,331.5 854.5,329.3 854.7,329.2 854.9,327.8 855.1,326.4 855.3,327.2 855.5,324.8 855.7,323.4 855.9,322.0 856.1,321.6 856.3,319.8 856.5,320.0 856.7,318.3 856.9,316.7 857.1,316.0 857.3,315.3 857.5,313.0 857.7,311.3 857.9,309.5 858.1,309.0 858.3,308.8 858.5,304.8 858.7,306.3 858.9,303.8 859.1,302.2 859.3,301.7 859.5,302.4 859.7,299.9 859.9,299.7 860.1,299.1 860.3,296.1 860.5,296.5 860.7,292.5 860.9,292.0 861.1,288.9 861.3,289.6 861.5,290.6 861.7,288.0 861.9,286.0 862.1,285.5 862.3,284.2 862.5,281.6 862.7,280.8 862.9,281.1 863.1,278.3 863.3,278.2 863.5,275.5 863.7,274.9 863.9,274.5 864.1,272.9 864.3,273.6 864.5,271.4 864.6,270.5 864.8,268.2 865.0,267.6 865.2,265.6 865.4,265.7 865.6,264.8 865.8,263.1 866.0,262.0 866.2,264.1 866.4,264.2 866.6,262.4 866.8,260.9 867.0,259.3 867.2,258.8 867.4,260.5 867.6,262.5 867.8,262.6 868.0,258.3 868.2,259.6 868.4,258.9 868.6,258.6 868.8,257.2 869.0,255.7 869.2,261.3 869.4,256.9 869.6,255.8 869.8,257.3 870.0,256.9 870.2,258.1 870.4,256.7 870.6,255.1 870.8,253.2 871.0,253.9 871.2,255.5 871.4,256.2 871.6,256.2 871.8,253.3 872.0,255.3 872.2,251.7 872.4,252.8 872.6,252.3 872.8,256.2 873.0,254.9 873.2,255.8 873.4,252.7 873.6,250.7 873.8,252.2 874.0,252.1 874.2,253.2 874.4,252.1 874.6,250.3 874.8,248.4 875.0,250.3 875.2,246.6 875.4,252.2 875.6,251.7 875.8,249.0 876.0,248.2 876.2,252.6 876.4,251.4 876.6,247.4 876.8,251.4 877.0,250.5 877.2,250.0 877.4,248.7 877.6,251.4 877.8,249.7 878.0,252.4 878.2,249.9 878.4,247.7 878.6,249.1 878.8,247.5 879.0,249.4 879.2,249.8 879.4,250.2 879.5,252.1 879.7,249.8 879.9,247.0 880.1,247.4 880.3,247.4 880.5,248.2 880.7,244.3 880.9,252.0 881.1,248.9 881.3,246.0 881.5,247.9 881.7,247.0 881.9,247.2 882.1,246.4 882.3,247.2 882.5,248.0 882.7,248.5 882.9,251.1 883.1,249.1 883.3,248.2 883.5,246.3 883.7,246.9 883.9,251.1 884.1,245.8 884.3,247.0 884.5,248.8 884.7,251.4 884.9,245.2 885.1,244.3 885.3,244.0 885.5,246.1 885.7,245.3 885.9,247.3 886.1,248.9 886.3,247.4 886.5,246.5 886.7,247.1 886.9,246.3 887.1,246.4 887.3,242.4 887.5,245.9 887.7,246.8 887.9,246.5 888.1,246.5 888.3,249.6 888.5,246.8 888.7,245.3 888.9,246.8 889.1,246.4 889.3,246.5 889.5,246.6 889.7,248.1 889.9,247.9 890.1,247.0 890.3,247.5 890.5,242.4 890.7,245.2 890.9,245.4 891.1,242.6 891.3,245.5 891.5,245.0 891.7,246.9 891.9,248.6 892.1,246.4 892.3,244.1 892.5,245.2 892.7,244.9 892.9,245.7 893.1,244.0 893.3,244.5 893.5,243.9 893.7,249.0 893.9,245.3 894.1,248.5 894.3,243.4 894.4,244.7 894.6,246.7 894.8,243.3 895.0,243.5 895.2,246.4 895.4,247.6 895.6,245.4 895.8,242.5 896.0,246.6 896.2,243.6 896.4,242.4 896.6,243.9 896.8,246.2 897.0,243.8 897.2,247.3 897.4,245.3 897.6,244.9 897.8,245.9 898.0,248.4 898.2,248.2 898.4,247.7 898.6,246.7 898.8,247.9" fill="none" stroke="#d95319" stroke-width="1.75" stroke-dasharray="5.5,3" stroke-linejoin="round"/></g>
<g clip-path="url(#c2)"><polyline points="346.5,623.6 347.0,656.6 347.8,685.0 349.0,693.8 351.7,696.4 357.8,696.4 358.4,698.2 358.9,701.0 359.4,703.8 360.0,706.3 360.5,708.6 361.0,710.6 361.6,712.4 362.1,714.0 362.6,715.4 363.2,716.6 363.7,717.7 364.2,718.6 364.8,719.4 365.3,720.2 365.8,720.8 366.4,721.3 366.9,721.8 367.4,722.3 368.0,722.6 368.5,723.0 369.0,723.2 369.6,723.5 370.1,723.7 370.6,723.9 371.2,724.1 371.7,724.2 372.2,724.3 372.8,724.5 373.3,724.6 373.8,724.6 374.4,724.7 374.9,724.8 375.4,724.8 376.0,724.9 376.5,724.9 377.0,725.0 377.6,725.0 378.1,725.0 378.6,725.1 379.2,725.1 379.7,725.1 380.2,725.1 380.8,725.1 381.3,725.2 381.8,725.2 382.4,725.2 382.9,725.2 383.4,725.2 384.0,725.2 384.5,725.2 385.0,725.2 385.6,725.2 386.1,725.2 386.6,725.2 387.2,725.2 387.7,725.2 388.2,725.2 388.8,725.2 389.3,725.2 389.8,725.2 390.4,725.2 390.9,725.2 391.4,725.2 392.0,725.2 392.5,725.2 393.0,725.2 393.6,725.2 394.1,725.2 394.6,725.2 395.2,725.2 395.7,725.2 396.2,725.2 396.8,725.2 397.3,725.2 397.8,725.2 398.4,725.2 398.9,725.2 399.4,725.2 400.0,725.2 400.5,725.2 401.0,725.2 401.6,725.2 402.1,725.2 402.6,725.2 403.2,725.2 403.7,725.2 404.2,725.2 404.8,725.2 405.3,725.2 405.8,725.2 406.4,725.2 406.9,725.2 407.4,725.2 408.0,725.2 408.5,725.2 409.0,725.2 409.6,725.2 410.1,725.2 410.6,725.2 411.2,725.2 411.7,725.2 412.2,725.2 412.8,725.2 413.3,725.2 413.8,725.2 414.4,725.2 414.9,725.2 415.4,725.2 416.0,725.2 416.5,725.2 417.0,725.2 417.6,725.2 418.1,725.2 418.6,725.2 419.2,725.2 419.7,725.2 420.2,725.2 420.8,725.2 421.3,725.2 421.8,725.2 422.4,725.2 422.9,725.2 423.4,725.2 424.0,725.2 424.5,725.2 425.0,725.2 425.6,725.2 426.1,725.2 426.5,646.3 427.8,619.0 428.6,677.3 429.5,641.1 430.6,692.2 431.5,661.8 432.4,682.4 433.2,659.2 434.0,679.8 435.7,615.9 436.5,661.8 437.3,630.8 438.0,656.6 439.0,626.7 440.2,677.3 441.0,698.2 442.5,620.5 443.9,545.7 444.5,594.7 445.2,563.7 445.8,612.8 446.5,592.1 447.3,625.7 448.6,682.9 449.0,685.7 449.4,687.9 449.8,689.5 450.2,690.8 450.6,691.7 451.0,692.5 451.4,693.1 451.8,693.5 452.2,693.9 452.6,694.2 453.0,694.4 453.4,694.6 453.8,694.8 454.2,694.9 454.6,695.0 455.0,695.1 455.4,695.2 455.8,695.2 456.2,695.3 456.6,695.3 457.0,695.4 457.4,695.4 457.8,695.5 458.2,695.5 458.6,695.5 459.0,695.6 459.4,695.6 459.8,695.6 460.2,695.7 460.6,695.7 461.0,695.7 461.4,695.7 461.8,695.8 462.2,695.8 462.6,695.8 463.0,695.8 463.4,695.8 463.8,695.9 464.2,695.9 464.6,695.9 465.0,695.9 465.4,695.9 465.8,695.9 466.2,696.0 466.6,696.0 467.0,696.0 467.4,696.0 467.8,696.0 468.2,696.0 468.6,696.0 469.0,696.0 469.4,696.1 469.8,696.4 469.8,696.4 470.4,698.2 470.9,701.0 471.4,703.8 472.0,706.3 472.5,708.6 473.0,710.6 473.6,712.4 474.1,714.0 474.6,715.4 475.2,716.6 475.7,717.7 476.2,718.6 476.8,719.4 477.3,720.2 477.8,720.8 478.4,721.3 478.9,721.8 479.4,722.3 480.0,722.6 480.5,723.0 481.0,723.2 481.6,723.5 482.1,723.7 482.6,723.9 483.2,724.1 483.7,724.2 484.2,724.3 484.8,724.5 485.3,724.6 485.8,724.6 486.4,724.7 486.9,724.8 487.4,724.8 488.0,724.9 488.5,724.9 489.0,725.0 489.6,725.0 490.1,725.0 490.6,725.1 491.2,725.1 491.7,725.1 492.2,725.1 492.8,725.1 493.3,725.2 493.8,725.2 494.4,725.2 494.9,725.2 495.4,725.2 496.0,725.2 496.5,725.2 497.0,725.2 497.6,725.2 498.1,725.2 498.6,725.2 499.2,725.2 499.7,725.2 500.2,725.2 500.8,725.2 501.3,725.2 501.8,725.2 502.4,725.2 502.9,725.2 503.4,725.2 504.0,725.2 504.5,725.2 505.0,725.2 505.6,725.2 506.1,725.2 506.6,725.2 507.2,725.2 507.7,725.2 508.2,725.2 508.8,725.2 509.3,725.2 509.8,725.2 510.4,725.2 510.9,725.2 511.4,725.2 512.0,725.2 512.5,725.2 513.0,725.2 513.6,725.2 513.6,725.2 513.8,674.2 514.5,692.7 515.6,649.9 516.6,644.8 517.8,682.9 519.6,609.1 520.5,646.3 521.3,583.9 522.5,663.8 524.3,626.7 525.3,656.6 526.3,696.4 526.7,695.9 527.1,695.6 527.5,695.4 527.9,695.3 528.3,695.2 528.7,695.1 529.1,695.1 529.5,695.1 529.9,695.1 530.3,695.1 530.7,695.1 531.1,695.1 531.5,695.1 531.9,695.2 532.3,695.2 532.7,695.2 533.1,695.3 533.5,695.3 533.9,695.4 534.3,695.4 534.6,696.4 534.6,696.4 535.2,698.2 535.7,701.0 536.2,703.8 536.8,706.3 537.3,708.6 537.8,710.6 538.4,712.4 538.9,714.0 539.4,715.4 540.0,716.6 540.5,717.7 541.0,718.6 541.6,719.4 542.1,720.2 542.6,720.8 543.2,721.3 543.7,721.8 544.2,722.3 544.8,722.6 545.3,723.0 545.8,723.2 546.4,723.5 546.9,723.7 547.4,723.9 548.0,724.1 548.5,724.2 549.0,724.3 549.6,724.5 550.1,724.6 550.6,724.6 551.2,724.7 551.7,724.8 552.2,724.8 552.8,724.9 553.3,724.9 553.8,725.0 554.4,725.0 554.9,725.0 555.4,725.1 556.0,725.1 556.5,725.1 557.0,725.1 557.6,725.1 558.1,725.2 558.6,725.2 559.2,725.2 559.7,725.2 560.2,725.2 560.8,725.2 561.3,725.2 561.8,725.2 562.4,725.2 562.9,725.2 563.4,725.2 564.0,725.2 564.5,725.2 565.0,725.2 565.6,725.2 566.1,725.2 566.6,725.2 567.2,725.2 567.7,725.2 568.2,725.2 568.8,725.2 569.3,725.2 569.8,725.2 570.4,725.2 570.9,725.2 571.4,725.2 572.0,725.2 572.5,725.2 573.0,725.2 573.6,725.2 574.1,725.2 574.6,725.2 575.2,725.2 575.7,725.2 576.2,725.2 576.8,725.2 577.3,725.2 577.8,725.2 578.4,725.2 578.9,725.2 579.4,725.2 580.0,725.2 580.5,725.2 581.0,725.2 581.6,725.2 582.1,725.2 582.6,725.2 583.2,725.2 583.7,725.2 584.2,725.2 584.8,725.2 585.3,725.2 585.8,725.2 586.4,725.2 586.9,725.2 587.4,725.2 587.7,725.2 588.1,687.6 588.8,631.3 590.2,672.1 592.0,621.5 592.5,631.3 594.0,675.7 594.6,661.8 596.0,691.7 596.8,640.1 598.2,621.5 598.8,659.2 600.4,613.3 601.5,659.2 603.0,677.3 604.0,621.5 605.4,577.2 606.8,659.2 607.9,684.5 608.3,686.9 608.7,688.8 609.1,690.2 609.5,691.3 609.9,692.1 610.3,692.8 610.7,693.3 611.1,693.7 611.5,694.0 611.9,694.3 612.3,694.5 612.7,694.7 613.1,694.8 613.5,694.9 613.9,695.0 614.3,695.1 614.7,695.2 615.1,695.2 615.5,695.3 615.9,695.3 616.3,695.4 616.7,695.4 617.1,695.5 617.5,695.5 617.9,695.5 618.3,695.6 618.7,695.6 619.1,695.6 619.5,695.7 619.9,695.7 620.3,695.7 620.7,695.7 621.1,695.8 621.5,695.8 621.9,695.8 622.3,695.8 622.7,695.8 623.1,695.9 623.5,695.9 623.9,695.9 624.3,695.9 624.7,695.9 625.1,695.9 625.5,696.0 625.8,696.4 625.8,696.4 626.4,698.2 626.9,701.0 627.4,703.8 628.0,706.3 628.5,708.6 629.0,710.6 629.6,712.4 630.1,714.0 630.6,715.4 631.2,716.6 631.7,717.7 632.2,718.6 632.8,719.4 633.3,720.2 633.8,720.8 634.4,721.3 634.9,721.8 635.4,722.3 636.0,722.6 636.5,723.0 637.0,723.2 637.6,723.5 638.1,723.7 638.6,723.9 639.2,724.1 639.7,724.2 640.2,724.3 640.8,724.5 641.3,724.6 641.8,724.6 642.4,724.7 642.9,724.8 643.4,724.8 644.0,724.9 644.5,724.9 645.0,725.0 645.6,725.0 646.1,725.0 646.6,725.1 647.2,725.1 647.7,725.1 648.2,725.1 648.8,725.1 649.3,725.2 649.8,725.2 650.4,725.2 650.9,725.2 651.4,725.2 652.0,725.2 652.5,725.2 653.0,725.2 653.6,725.2 654.1,725.2 654.6,725.2 655.2,725.2 655.7,725.2 656.2,725.2 656.8,725.2 657.3,725.2 657.8,725.2 658.4,725.2 658.9,725.2 659.4,725.2 660.0,725.2 660.5,725.2 661.0,725.2 661.6,725.2 662.1,725.2 662.6,725.2 663.2,725.2 663.7,725.2 664.2,725.2 664.8,725.2 665.3,725.2 665.8,725.2 666.4,725.2 666.9,725.2 667.4,725.2 668.0,725.2 668.5,725.2 669.0,725.2 669.6,725.2 670.1,725.2 670.6,725.2 671.2,725.2 671.7,725.2 672.2,725.2 672.8,725.2 672.8,725.2 673.3,672.1 674.2,551.9 675.3,655.1 677.0,592.1 678.0,625.7 678.8,578.2 680.5,664.9 682.5,518.3 683.7,615.3 685.3,561.7 686.2,642.7 687.8,682.4 688.2,685.3 688.6,687.6 689.0,689.3 689.4,690.6 689.8,691.6 690.2,692.4 690.6,693.0 691.0,693.5 691.4,693.9 691.8,694.2 692.2,694.4 692.6,694.6 693.0,694.7 693.4,694.9 693.8,695.0 694.2,695.1 694.6,695.1 695.0,695.2 695.4,695.3 695.8,695.3 696.2,695.4 696.6,695.4 697.0,695.5 697.4,695.5 697.8,695.5 698.2,695.6 698.6,695.6 699.0,695.6 699.4,695.7 699.8,695.7 700.2,695.7 700.6,695.7 701.0,695.8 701.4,695.8 701.8,695.8 702.2,695.8 702.6,695.8 703.0,695.9 703.4,695.9 703.8,695.9 704.2,695.9 704.6,695.9 705.0,695.9 705.2,696.4 705.2,696.4 705.7,698.2 706.2,701.0 706.8,703.8 707.3,706.3 707.8,708.6 708.4,710.6 708.9,712.4 709.4,714.0 710.0,715.4 710.5,716.6 711.0,717.7 711.6,718.6 712.1,719.4 712.6,720.2 713.2,720.8 713.7,721.3 714.2,721.8 714.8,722.3 715.3,722.6 715.8,723.0 716.4,723.2 716.9,723.5 717.4,723.7 718.0,723.9 718.5,724.1 719.0,724.2 719.6,724.3 720.1,724.5 720.6,724.6 721.2,724.6 721.7,724.7 722.2,724.8 722.8,724.8 723.3,724.9 723.8,724.9 724.4,725.0 724.9,725.0 725.4,725.0 726.0,725.1 726.5,725.1 727.0,725.1 727.6,725.1 728.1,725.1 728.6,725.2 729.2,725.2 729.7,725.2 730.2,725.2 730.8,725.2 731.3,725.2 731.8,725.2 732.4,725.2 732.9,725.2 733.4,725.2 734.0,725.2 734.5,725.2 735.0,725.2 735.6,725.2 736.1,725.2 736.6,725.2 737.2,725.2 737.7,725.2 738.2,725.2 738.8,725.2 739.3,725.2 739.8,725.2 740.4,725.2 740.9,725.2 741.4,725.2 742.0,725.2 742.5,725.2 743.0,725.2 743.6,725.2 744.1,725.2 744.6,725.2 745.2,725.2 745.7,725.2 746.2,725.2 746.8,725.2 747.3,725.2 747.8,725.2 748.4,725.2 748.9,725.2 749.2,725.2 749.7,687.6 751.0,599.9 751.7,625.7 752.2,646.3 752.6,599.9 754.1,542.1 755.0,589.5 755.8,598.3 756.8,649.9 758.2,677.3 759.0,666.9 759.8,679.8 761.8,597.8 762.5,636.0 763.4,649.9 764.0,602.4 764.5,620.5 765.2,599.9 766.2,625.7 768.0,687.1 768.4,688.9 768.8,690.3 769.2,691.3 769.6,692.1 770.0,692.8 770.4,693.3 770.8,693.7 771.2,694.0 771.6,694.3 772.0,694.5 772.4,694.6 772.8,694.8 773.2,694.9 773.6,695.0 774.0,695.1 774.4,695.1 774.8,695.2 775.2,695.2 775.6,695.3 776.0,695.3 776.4,695.4 776.8,695.4 777.2,695.5 777.6,695.5 778.0,695.5 778.4,695.6 778.8,695.6 779.2,695.6 779.6,695.7 780.0,695.7 780.4,695.7 780.8,695.7 781.2,695.8 781.6,695.8 782.0,695.8 782.4,695.8 782.8,695.8 783.2,695.9 783.6,695.9 784.0,695.9 784.4,695.9 784.8,695.9 785.2,695.9 785.6,696.0 786.0,696.0 786.4,696.0 786.8,696.0 787.2,696.0 787.6,696.0 788.0,696.0 788.4,696.0 788.8,696.1 789.2,696.1 789.5,696.4 789.5,696.4 790.0,698.2 790.6,701.0 791.1,703.8 791.6,706.3 792.2,708.6 792.7,710.6 793.2,712.4 793.8,714.0 794.3,715.4 794.8,716.6 795.4,717.7 795.9,718.6 796.4,719.4 797.0,720.2 797.5,720.8 798.0,721.3 798.6,721.8 799.1,722.3 799.6,722.6 800.2,723.0 800.7,723.2 801.2,723.5 801.8,723.7 802.3,723.9 802.8,724.1 803.4,724.2 803.9,724.3 804.4,724.5 805.0,724.6 805.5,724.6 806.0,724.7 806.6,724.8 807.1,724.8 807.6,724.9 808.2,724.9 808.7,725.0 809.2,725.0 809.8,725.0 810.3,725.1 810.8,725.1 811.4,725.1 811.9,725.1 812.4,725.1 813.0,725.2 813.5,725.2 814.0,725.2 814.6,725.2 815.1,725.2 815.6,725.2 816.2,725.2 816.7,725.2 817.2,725.2 817.8,725.2 818.3,725.2 818.8,725.2 819.4,725.2 819.9,725.2 820.4,725.2 821.0,725.2 821.5,725.2 822.0,725.2 822.6,725.2 823.1,725.2 823.6,725.2 824.2,725.2 824.7,725.2 825.2,725.2 825.8,725.2 826.3,725.2 826.8,725.2 827.4,725.2 827.9,725.2 828.4,725.2 829.0,725.2 829.5,725.2 830.0,725.2 830.6,725.2 831.1,725.2 831.6,725.2 832.2,725.2 832.7,725.2 833.2,725.2 833.6,725.2 834.0,687.6 834.4,657.7 834.9,679.8 836.5,600.4 837.3,646.3 838.2,630.8 839.2,675.7 840.6,624.1 841.5,661.8 842.5,651.5 843.7,684.0 844.8,623.1 845.4,646.3 846.0,629.3 847.0,664.4 848.5,690.2 848.9,691.2 849.3,692.0 849.7,692.7 850.1,693.2 850.5,693.6 850.9,693.9 851.3,694.2 851.7,694.4 852.1,694.5 852.5,694.7 852.9,694.8 853.3,694.9 853.7,695.0 854.1,695.0 854.5,695.1 854.9,695.2 855.3,695.2 855.7,695.3 856.1,695.3 856.5,695.4 856.9,695.4 857.3,695.4 857.7,696.4 857.7,696.4 858.2,698.2 858.8,701.0 859.3,703.8 859.8,706.3 860.4,708.6 860.9,710.6 861.4,712.4 862.0,714.0 862.5,715.4 863.0,716.6 863.6,717.7 864.1,718.6 864.6,719.4 865.2,720.2 865.7,720.8 866.2,721.3 866.8,721.8 867.3,722.3 867.8,722.6 868.4,723.0 868.9,723.2 869.4,723.5 870.0,723.7 870.5,723.9 871.0,724.1 871.6,724.2 872.1,724.3 872.6,724.5 873.2,724.6 873.7,724.6 874.2,724.7 874.8,724.8 875.3,724.8 875.8,724.9 876.4,724.9 876.9,725.0 877.4,725.0 878.0,725.0 878.5,725.1 879.0,725.1 879.6,725.1 880.1,725.1 880.6,725.1 881.2,725.2 881.7,725.2 882.2,725.2 882.8,725.2 883.3,725.2 883.8,725.2 884.4,725.2 884.9,725.2 885.4,725.2 886.0,725.2 886.5,725.2 887.0,725.2 887.6,725.2 888.1,725.2 888.6,725.2 889.2,725.2 889.7,725.2 890.2,725.2 890.8,725.2 891.3,725.2 891.8,725.2 892.4,725.2 892.9,725.2 893.4,725.2 894.0,725.2 894.5,725.2 895.0,725.2 895.6,725.2 896.1,725.2 896.6,725.2 897.2,725.2 897.7,725.2 898.2,725.2 898.5,725.2" fill="none" stroke="#0072bd" stroke-width="1.3" stroke-linejoin="miter" stroke-miterlimit="3"/></g>
<path d="M350.5 221.5 V453.5 H946.5" fill="none" stroke="#262626" stroke-width="1.3"/>
<path d="M350.5 453.5 h5 M350.5 424.5 h5 M350.5 395.5 h5 M350.5 366.5 h5 M350.5 337.5 h5 M350.5 308.5 h5 M350.5 279.5 h5 M350.5 250.5 h5 M350.5 221.5 h5 M416.7 453.5 v-5 M482.9 453.5 v-5 M549.2 453.5 v-5 M615.4 453.5 v-5 M681.6 453.5 v-5 M747.8 453.5 v-5 M814.1 453.5 v-5 M880.3 453.5 v-5 M946.5 453.5 v-5 " stroke="#262626" stroke-width="1.3"/>
<text x="346.0" y="457.5" font-size="12.2" fill="#262626" text-anchor="end" letter-spacing="-0.4">0.2</text>
<text x="346.0" y="428.5" font-size="12.2" fill="#262626" text-anchor="end" letter-spacing="-0.4">0.3</text>
<text x="346.0" y="399.5" font-size="12.2" fill="#262626" text-anchor="end" letter-spacing="-0.4">0.4</text>
<text x="346.0" y="370.5" font-size="12.2" fill="#262626" text-anchor="end" letter-spacing="-0.4">0.5</text>
<text x="346.0" y="341.5" font-size="12.2" fill="#262626" text-anchor="end" letter-spacing="-0.4">0.6</text>
<text x="346.0" y="312.5" font-size="12.2" fill="#262626" text-anchor="end" letter-spacing="-0.4">0.7</text>
<text x="346.0" y="283.5" font-size="12.2" fill="#262626" text-anchor="end" letter-spacing="-0.4">0.8</text>
<text x="346.0" y="254.5" font-size="12.2" fill="#262626" text-anchor="end" letter-spacing="-0.4">0.9</text>
<text x="346.0" y="225.5" font-size="12.2" fill="#262626" text-anchor="end" letter-spacing="-0.4">1</text>
<text x="350.7" y="469.0" font-size="12.2" fill="#262626" text-anchor="middle" letter-spacing="-0.4">0</text>
<text x="416.9" y="469.0" font-size="12.2" fill="#262626" text-anchor="middle" letter-spacing="-0.4">1000</text>
<text x="483.1" y="469.0" font-size="12.2" fill="#262626" text-anchor="middle" letter-spacing="-0.4">2000</text>
<text x="549.4" y="469.0" font-size="12.2" fill="#262626" text-anchor="middle" letter-spacing="-0.4">3000</text>
<text x="615.6" y="469.0" font-size="12.2" fill="#262626" text-anchor="middle" letter-spacing="-0.4">4000</text>
<text x="681.8" y="469.0" font-size="12.2" fill="#262626" text-anchor="middle" letter-spacing="-0.4">5000</text>
<text x="748.0" y="469.0" font-size="12.2" fill="#262626" text-anchor="middle" letter-spacing="-0.4">6000</text>
<text x="814.3" y="469.0" font-size="12.2" fill="#262626" text-anchor="middle" letter-spacing="-0.4">7000</text>
<text x="880.5" y="469.0" font-size="12.2" fill="#262626" text-anchor="middle" letter-spacing="-0.4">8000</text>
<text x="946.7" y="469.0" font-size="12.2" fill="#262626" text-anchor="middle" letter-spacing="-0.4">9000</text>
<text x="649.5" y="484" font-size="13" letter-spacing="-0.2" fill="#262626" text-anchor="middle">Time Step</text>
<text transform="translate(322.5 338) rotate(-90)" x="0" y="0" font-size="13" letter-spacing="-0.2" fill="#262626" text-anchor="middle">Feature 1</text>
<text x="649.5" y="215.9" font-size="13.4" letter-spacing="-0.15" font-weight="bold" fill="#262626" text-anchor="middle">Response vs Prediction</text>
<path d="M346.5 517.3 V749.5 H946.5" fill="none" stroke="#262626" stroke-width="1.3"/>
<path d="M346.5 749.5 h5 M346.5 723.7 h5 M346.5 697.9 h5 M346.5 672.1 h5 M346.5 646.3 h5 M346.5 620.5 h5 M346.5 594.7 h5 M346.5 568.9 h5 M346.5 543.1 h5 M346.5 517.3 h5 M413.2 749.5 v-5 M479.8 749.5 v-5 M546.5 749.5 v-5 M613.2 749.5 v-5 M679.8 749.5 v-5 M746.5 749.5 v-5 M813.2 749.5 v-5 M879.8 749.5 v-5 M946.5 749.5 v-5 " stroke="#262626" stroke-width="1.3"/>
<text x="342.0" y="753.5" font-size="12.2" fill="#262626" text-anchor="end" letter-spacing="-0.4">0</text>
<text x="342.0" y="727.7" font-size="12.2" fill="#262626" text-anchor="end" letter-spacing="-0.4">5</text>
<text x="342.0" y="701.9" font-size="12.2" fill="#262626" text-anchor="end" letter-spacing="-0.4">10</text>
<text x="342.0" y="676.1" font-size="12.2" fill="#262626" text-anchor="end" letter-spacing="-0.4">15</text>
<text x="342.0" y="650.3" font-size="12.2" fill="#262626" text-anchor="end" letter-spacing="-0.4">20</text>
<text x="342.0" y="624.5" font-size="12.2" fill="#262626" text-anchor="end" letter-spacing="-0.4">25</text>
<text x="342.0" y="598.7" font-size="12.2" fill="#262626" text-anchor="end" letter-spacing="-0.4">30</text>
<text x="342.0" y="572.9" font-size="12.2" fill="#262626" text-anchor="end" letter-spacing="-0.4">35</text>
<text x="342.0" y="547.1" font-size="12.2" fill="#262626" text-anchor="end" letter-spacing="-0.4">40</text>
<text x="342.0" y="521.3" font-size="12.2" fill="#262626" text-anchor="end" letter-spacing="-0.4">45</text>
<text x="346.7" y="764.9" font-size="12.2" fill="#262626" text-anchor="middle" letter-spacing="-0.4">0</text>
<text x="413.4" y="764.9" font-size="12.2" fill="#262626" text-anchor="middle" letter-spacing="-0.4">1000</text>
<text x="480.0" y="764.9" font-size="12.2" fill="#262626" text-anchor="middle" letter-spacing="-0.4">2000</text>
<text x="546.7" y="764.9" font-size="12.2" fill="#262626" text-anchor="middle" letter-spacing="-0.4">3000</text>
<text x="613.4" y="764.9" font-size="12.2" fill="#262626" text-anchor="middle" letter-spacing="-0.4">4000</text>
<text x="680.0" y="764.9" font-size="12.2" fill="#262626" text-anchor="middle" letter-spacing="-0.4">5000</text>
<text x="746.7" y="764.9" font-size="12.2" fill="#262626" text-anchor="middle" letter-spacing="-0.4">6000</text>
<text x="813.4" y="764.9" font-size="12.2" fill="#262626" text-anchor="middle" letter-spacing="-0.4">7000</text>
<text x="880.0" y="764.9" font-size="12.2" fill="#262626" text-anchor="middle" letter-spacing="-0.4">8000</text>
<text x="946.7" y="764.9" font-size="12.2" fill="#262626" text-anchor="middle" letter-spacing="-0.4">9000</text>
<text x="647.5" y="779.6" font-size="13" letter-spacing="-0.2" fill="#262626" text-anchor="middle">Time Step</text>
<text transform="translate(322.5 633) rotate(-90)" x="0" y="0" font-size="13" letter-spacing="-0.2" fill="#262626" text-anchor="middle">Feature 1</text>
<text x="647.5" y="511.8" font-size="13.4" letter-spacing="-0.15" font-weight="bold" fill="#262626" text-anchor="middle">Predictor Data</text>
<rect x="836.5" y="231.5" width="99" height="28" fill="#fff" stroke="#262626" stroke-width="1.3"/>
<line x1="839.7" y1="239.4" x2="879.4" y2="239.4" stroke="#0072bd" stroke-width="1.4"/>
<line x1="839.7" y1="251.4" x2="879.4" y2="251.4" stroke="#d95319" stroke-width="1.4" stroke-dasharray="8.5,6.5"/>
<text x="883.6" y="242.6" font-size="10.7" fill="#262626">Response</text>
<text x="883.6" y="255.4" font-size="10.7" fill="#262626">Prediction</text>
<circle cx="931.5" cy="209.5" r="1.5" fill="#5a5a5a"/>
<circle cx="937.5" cy="209.5" r="1.5" fill="#5a5a5a"/>
<circle cx="943.5" cy="209.5" r="1.5" fill="#5a5a5a"/>
<circle cx="931.5" cy="505.4" r="1.5" fill="#5a5a5a"/>
<circle cx="937.5" cy="505.4" r="1.5" fill="#5a5a5a"/>
<circle cx="943.5" cy="505.4" r="1.5" fill="#5a5a5a"/>
</svg>
<!-- right panel -->
<div class="a" style="left:971px;top:201px;width:247px;height:581px;border:1px solid #8f8f8f;border-bottom:1px solid #b0b0b0;background:#f4f4f4"></div>
<div class="a" style="left:1186px;top:212px;width:22px;height:22px;border:1px solid #858585;border-radius:5px"></div>
<svg class="a" style="left:1190px;top:214px" width="14" height="18" viewBox="0 0 14 18"><path d="M0.8 0.7 L9.6 9 L0.8 17.3Z" fill="#5f5f5f"/><rect x="10" y="0.7" width="3" height="16.6" fill="#5f5f5f"/></svg>
<div class="lbl" style="top:249px">Data source</div>
<div class="dd" style="top:244px;height:23px"><span class="v">Validation</span><span class="ar"></span></div>
<div class="lbl" style="top:282px">Observation</div>
<div class="a" style="left:1108px;top:277px;width:100px;height:22px;border:1px solid #8c8c8c;border-radius:0 4px 4px 0;background:#fff"></div>
<div class="a" style="left:1185px;top:278px;width:22px;height:20px;background:#f5f5f5;border-left:1px solid #8c8c8c;border-radius:0 3px 3px 0"></div>
<div class="a" style="left:1186px;top:287px;width:21px;height:1px;background:#d0d0d0"></div>
<div class="a" style="left:1192px;top:280px;border-left:4px solid transparent;border-right:4px solid transparent;border-bottom:5px solid #555"></div>
<div class="a" style="left:1192px;top:291px;border-left:4px solid transparent;border-right:4px solid transparent;border-top:5px solid #c8c8c8"></div>
<div class="t" style="left:1174px;top:282px;font-size:12px;color:#212121">1</div>
<div class="lbl" style="top:314px">Time steps to predict</div>
<div class="a" style="left:1108px;top:309px;width:100px;height:22px;border:1px solid #8c8c8c;border-radius:0 4px 4px 0;background:#fff"></div>
<div class="a" style="left:1185px;top:310px;width:22px;height:20px;background:#f5f5f5;border-left:1px solid #8c8c8c;border-radius:0 3px 3px 0"></div>
<div class="a" style="left:1186px;top:319px;width:21px;height:1px;background:#8c8c8c"></div>
<div class="a" style="left:1192px;top:312px;border-left:4px solid transparent;border-right:4px solid transparent;border-bottom:5px solid #c8c8c8"></div>
<div class="a" style="left:1192px;top:323px;border-left:4px solid transparent;border-right:4px solid transparent;border-top:5px solid #555"></div>
<div class="t" style="left:1154px;top:314px;font-size:12px;color:#212121">8281</div>
<div class="lbl" style="top:343px">RMSE</div>
<div class="t" style="left:1108px;top:343px;font-size:12px;color:#212121">0.03694</div>
<div class="lbl" style="top:370px">Prediction time</div>
<div class="t" style="left:1108px;top:370px;font-size:12px;color:#212121">~629 ms</div>
<div class="lbl" style="top:400px">Response feature</div>
<div class="dd" style="top:394px;height:23px"><span class="v">Feature 1</span><span class="ar"></span></div>
<div class="lbl" style="top:432px">Predictor feature</div>
<div class="dd" style="top:427px;height:23px"><span class="v">Feature 1</span><span class="ar"></span></div>
</body></html>
